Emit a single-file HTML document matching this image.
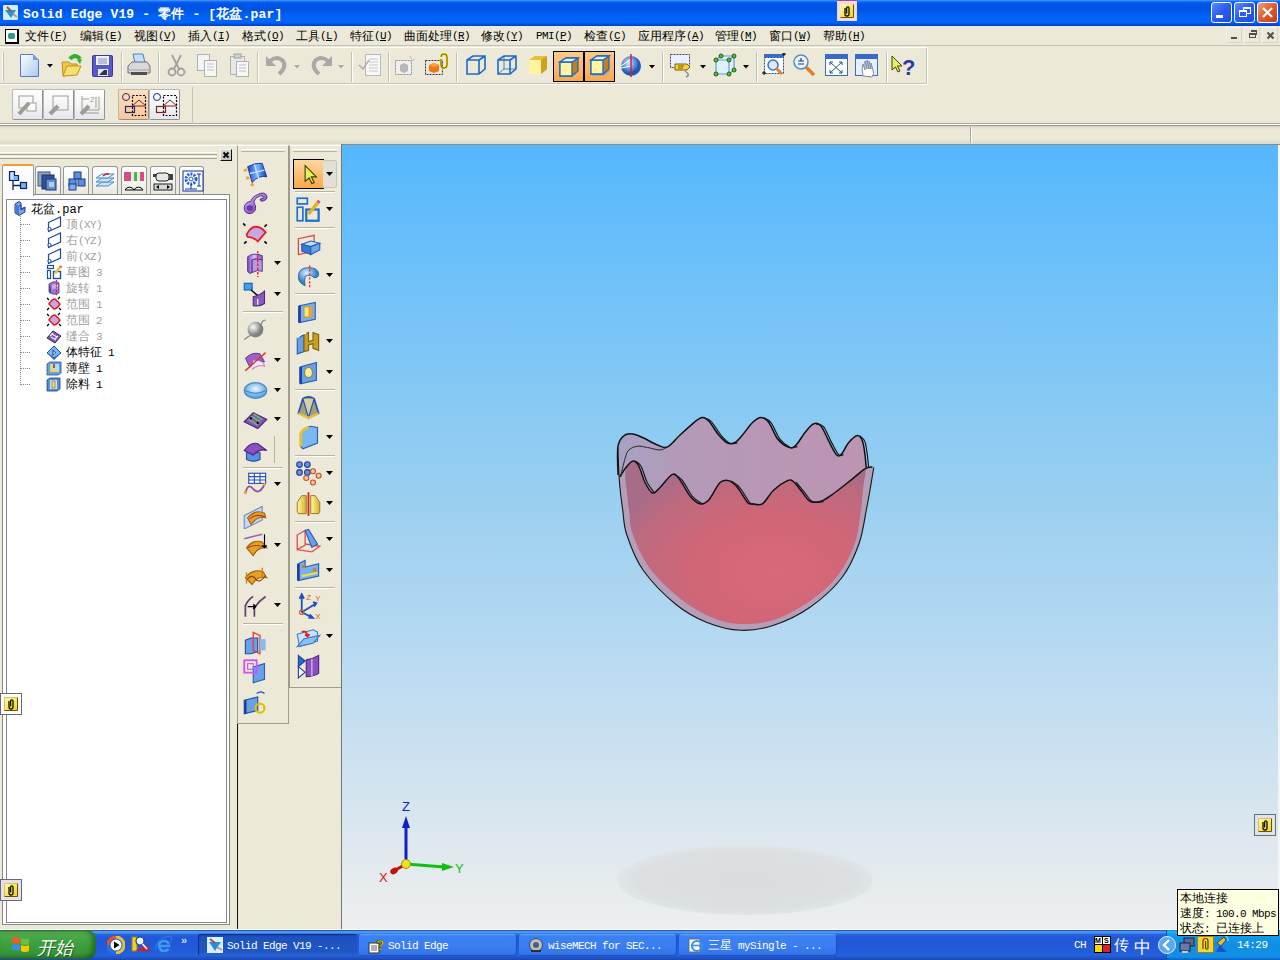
<!DOCTYPE html><html><head><meta charset="utf-8"><title>Solid Edge</title><style>
*{margin:0;padding:0;box-sizing:border-box}
html,body{width:1280px;height:960px;overflow:hidden;background:#ECE9D8;font-family:"Liberation Sans",sans-serif;font-size:12px;color:#000}
.a{position:absolute}
.t{position:absolute;white-space:nowrap;line-height:1}
</style></head><body>
<div class="a" style="left:0;top:0;width:1280px;height:26px;background:linear-gradient(#4A9AFF 0px,#2A80FF 1px,#0860F0 2px,#0055E8 4px,#0054E3 10px,#0062F6 16px,#0066FA 22px,#0052E4 24px,#003CC8 26px)"></div>
<div class="a" style="left:3px;top:5px;width:15px;height:15px;background:#CFEFFF;border-radius:1px"></div>
<svg class="a" style="left:3px;top:5px" width="15" height="15"><path d="M2 5 L8 13 L13 5 Z" fill="#2A8FD8"/><path d="M4 2 L8 6" stroke="#B05030" stroke-width="2"/><path d="M10 9 L14 12" stroke="#D09080" stroke-width="2"/></svg>
<div class="t" style="left:23px;top:5px;font:bold 13px 'Liberation Mono', monospace;color:#fff;letter-spacing:0.15px">Solid Edge V19 - 零件 - [花盆.par]</div>
<div class="a" style="left:837px;top:0px;width:20px;height:21px;background:#F6D8EE;border-top:1px solid #A05080"></div>
<svg class="a" style="left:840px;top:4px" width="14" height="14"><defs><linearGradient id="cy" x1="0" y1="0" x2="1" y2="1"><stop offset="0" stop-color="#FFFCB0"/><stop offset="1" stop-color="#F0D020"/></linearGradient></defs><rect x="0" y="0" width="14" height="14" fill="url(#cy)"/><path d="M0.5 13.5 H13.5 V0.5" stroke="#705000" fill="none"/><path d="M5 4 V10 A1.5 1.5 0 0 0 9 10 V4 A1.2 1.2 0 0 0 6.6 4 V9.5" stroke="#101000" stroke-width="1.3" fill="none"/></svg>
<div class="a" style="left:1211px;top:2px;width:21px;height:21px;border:1px solid #fff;border-radius:3px;background:linear-gradient(135deg,#5A8CFF,#2A5AF0 50%,#1F4FE0)"></div>
<div class="a" style="left:1216px;top:15px;width:7px;height:3px;background:#fff"></div>
<div class="a" style="left:1234px;top:2px;width:21px;height:21px;border:1px solid #fff;border-radius:3px;background:linear-gradient(135deg,#5A8CFF,#2A5AF0 50%,#1F4FE0)"></div>
<div class="a" style="left:1243px;top:7px;width:8px;height:7px;border:1px solid #fff;border-top-width:2px"></div>
<div class="a" style="left:1239px;top:10px;width:8px;height:7px;border:1px solid #fff;border-top-width:2px;background:#2F5FF0"></div>
<div class="a" style="left:1257px;top:2px;width:21px;height:21px;border:1px solid #fff;border-radius:3px;background:linear-gradient(135deg,#F0A080,#E05A30 50%,#C83C18)"></div>
<svg class="a" style="left:1257px;top:2px" width="21" height="21"><path d="M6 6 L15 15 M15 6 L6 15" stroke="#fff" stroke-width="2.2"/></svg>
<div class="a" style="left:0;top:26px;width:1280px;height:20px;background:#ECE9D8;border-bottom:1px solid #C5C2B2"></div>
<div class="a" style="left:5px;top:29px;width:14px;height:15px;background:#fff;border:1px solid #000;border-width:1px 2px 2px 1px"></div>
<div class="a" style="left:8px;top:33px;width:7px;height:6px;background:#2A9A8A;border-radius:2px"></div>
<div class="t" style="left:25px;top:30px;font-size:12px"><span style="font-size:12px">文件</span><span style="font:11px 'Liberation Mono', monospace;letter-spacing:-0.6px;position:relative;top:-1px">(<u>F</u>)</span></div>
<div class="t" style="left:80px;top:30px;font-size:12px"><span style="font-size:12px">编辑</span><span style="font:11px 'Liberation Mono', monospace;letter-spacing:-0.6px;position:relative;top:-1px">(<u>E</u>)</span></div>
<div class="t" style="left:134px;top:30px;font-size:12px"><span style="font-size:12px">视图</span><span style="font:11px 'Liberation Mono', monospace;letter-spacing:-0.6px;position:relative;top:-1px">(<u>V</u>)</span></div>
<div class="t" style="left:188px;top:30px;font-size:12px"><span style="font-size:12px">插入</span><span style="font:11px 'Liberation Mono', monospace;letter-spacing:-0.6px;position:relative;top:-1px">(<u>I</u>)</span></div>
<div class="t" style="left:242px;top:30px;font-size:12px"><span style="font-size:12px">格式</span><span style="font:11px 'Liberation Mono', monospace;letter-spacing:-0.6px;position:relative;top:-1px">(<u>O</u>)</span></div>
<div class="t" style="left:296px;top:30px;font-size:12px"><span style="font-size:12px">工具</span><span style="font:11px 'Liberation Mono', monospace;letter-spacing:-0.6px;position:relative;top:-1px">(<u>L</u>)</span></div>
<div class="t" style="left:350px;top:30px;font-size:12px"><span style="font-size:12px">特征</span><span style="font:11px 'Liberation Mono', monospace;letter-spacing:-0.6px;position:relative;top:-1px">(<u>U</u>)</span></div>
<div class="t" style="left:404px;top:30px;font-size:12px"><span style="font-size:12px">曲面处理</span><span style="font:11px 'Liberation Mono', monospace;letter-spacing:-0.6px;position:relative;top:-1px">(<u>R</u>)</span></div>
<div class="t" style="left:481px;top:30px;font-size:12px"><span style="font-size:12px">修改</span><span style="font:11px 'Liberation Mono', monospace;letter-spacing:-0.6px;position:relative;top:-1px">(<u>Y</u>)</span></div>
<div class="t" style="left:536px;top:30px;font-size:12px"><span style="font:11px 'Liberation Mono', monospace;letter-spacing:-0.6px;position:relative;top:-1px">PMI</span><span style="font:11px 'Liberation Mono', monospace;letter-spacing:-0.6px;position:relative;top:-1px">(<u>P</u>)</span></div>
<div class="t" style="left:584px;top:30px;font-size:12px"><span style="font-size:12px">检查</span><span style="font:11px 'Liberation Mono', monospace;letter-spacing:-0.6px;position:relative;top:-1px">(<u>C</u>)</span></div>
<div class="t" style="left:638px;top:30px;font-size:12px"><span style="font-size:12px">应用程序</span><span style="font:11px 'Liberation Mono', monospace;letter-spacing:-0.6px;position:relative;top:-1px">(<u>A</u>)</span></div>
<div class="t" style="left:715px;top:30px;font-size:12px"><span style="font-size:12px">管理</span><span style="font:11px 'Liberation Mono', monospace;letter-spacing:-0.6px;position:relative;top:-1px">(<u>M</u>)</span></div>
<div class="t" style="left:769px;top:30px;font-size:12px"><span style="font-size:12px">窗口</span><span style="font:11px 'Liberation Mono', monospace;letter-spacing:-0.6px;position:relative;top:-1px">(<u>W</u>)</span></div>
<div class="t" style="left:823px;top:30px;font-size:12px"><span style="font-size:12px">帮助</span><span style="font:11px 'Liberation Mono', monospace;letter-spacing:-0.6px;position:relative;top:-1px">(<u>H</u>)</span></div>
<div class="a" style="left:1226px;top:27px;width:16px;height:16px;border:1px solid #F4F2EA;border-right-color:#D8D5C8;border-bottom-color:#D8D5C8;background:#ECE9D8"></div>
<div class="a" style="left:1244px;top:27px;width:16px;height:16px;border:1px solid #F4F2EA;border-right-color:#D8D5C8;border-bottom-color:#D8D5C8;background:#ECE9D8"></div>
<div class="a" style="left:1262px;top:27px;width:16px;height:16px;border:1px solid #F4F2EA;border-right-color:#D8D5C8;border-bottom-color:#D8D5C8;background:#ECE9D8"></div>
<div class="a" style="left:1231px;top:37px;width:6px;height:2px;background:#505050"></div>
<div class="a" style="left:1249px;top:33px;width:7px;height:5px;border:1px solid #505050;border-top-width:2px"></div>
<div class="a" style="left:1251px;top:30px;width:6px;height:5px;border-top:2px solid #505050;border-right:1px solid #505050"></div>
<svg class="a" style="left:1266px;top:31px" width="10" height="10"><path d="M1.5 1.5 L7.5 7.5 M7.5 1.5 L1.5 7.5" stroke="#505050" stroke-width="2"/></svg>
<div class="a" style="left:0;top:47px;width:1280px;height:78px;background:#ECE9D8"></div>
<div class="a" style="left:0;top:83px;width:927px;height:1px;background:#C9C6B6"></div>
<div class="a" style="left:0;top:84px;width:928px;height:1px;background:#FFFFFF"></div>
<div class="a" style="left:0;top:47px;width:927px;height:1px;background:#FFFFFF"></div>
<div class="a" style="left:0;top:123px;width:1280px;height:1px;background:#A8A496"></div>
<div class="a" style="left:0;top:124px;width:1280px;height:1px;background:#FFFFFF"></div>
<div class="a" style="left:926px;top:48px;width:1px;height:36px;background:#C9C6B6"></div>
<div class="a" style="left:927px;top:48px;width:1px;height:37px;background:#FFFFFF"></div>
<div class="a" style="left:2px;top:52px;width:2px;height:29px;border-left:1px solid #fff;border-right:1px solid #C0BDAD"></div>
<div class="a" style="left:192px;top:87px;width:1px;height:37px;background:#C9C6B6"></div>
<svg class="a" style="left:20px;top:54px" width="20" height="23"><defs><linearGradient id="nd" x1="0" y1="0" x2="1" y2="1"><stop offset="0" stop-color="#FFFFFF"/><stop offset="1" stop-color="#A8C8F0"/></linearGradient></defs><path d="M.5 .5 H13 L18.5 6 V22.5 H.5 Z" fill="url(#nd)" stroke="#5A7AB8"/><path d="M13 .5 V6 H18.5 Z" fill="#7A9AD8"/></svg>
<svg class="a" style="left:47px;top:64px" width="6" height="4"><path d="M0 0 H6 L3 3.5 Z" fill="#000"/></svg>
<svg class="a" style="left:61px;top:54px" width="22" height="23"><path d="M1 8 L8 8 L10 10 H16 V20 L2 22 Z" fill="#F0C848" stroke="#C09020"/><path d="M2 22 L6 12 H20 L16 21 Z" fill="#F8E070" stroke="#C09020"/><path d="M9 5 Q14 -1 19 5" stroke="#30B030" stroke-width="4" fill="none"/><path d="M16 6 L21 5 L19 10 Z" fill="#30B030"/></svg>
<svg class="a" style="left:92px;top:55px" width="21" height="22"><rect x=".5" y=".5" width="20" height="21" rx="1" fill="#5A58C8" stroke="#3A38A0"/><rect x="4" y="1" width="13" height="9" fill="#F0F0F8"/><path d="M6 4 H15 M6 6 H15 M6 8 H15" stroke="#8888C0"/><rect x="6" y="14" width="10" height="7" fill="#E8E8F0"/><path d="M7 20 L12 15 H15 V20 Z" fill="#303060"/></svg>
<div class="a" style="left:121px;top:52px;width:2px;height:30px;border-left:1px solid #C5C2B2;border-right:1px solid #fff"></div>
<svg class="a" style="left:127px;top:53px" width="24" height="24"><path d="M6 1 H16 L18 10 H8 Z" fill="#BFE0FF" stroke="#5080B0"/><path d="M1 13 L5 9 H20 L23 13 V20 H1 Z" fill="#D8D8D8" stroke="#707070"/><path d="M1 17 H23" stroke="#A0A0A0"/><rect x="4" y="19" width="16" height="3" fill="#505050"/></svg>
<div class="a" style="left:158px;top:52px;width:2px;height:30px;border-left:1px solid #C5C2B2;border-right:1px solid #fff"></div>
<svg class="a" style="left:167px;top:54px" width="19" height="23"><path d="M5 1 L12 15 M14 1 L7 15" stroke="#A0A0A0" stroke-width="1.8"/><circle cx="5" cy="18" r="3.5" fill="none" stroke="#A0A0A0" stroke-width="1.8"/><circle cx="14" cy="18" r="3.5" fill="none" stroke="#A0A0A0" stroke-width="1.8"/></svg>
<svg class="a" style="left:197px;top:54px" width="21" height="23"><rect x=".5" y=".5" width="12" height="16" fill="#F4F4F4" stroke="#B0B0B0"/><rect x="7.5" y="6.5" width="12" height="16" fill="#F8F8F8" stroke="#B0B0B0"/><path d="M10 10 H17 M10 13 H17 M10 16 H17" stroke="#C0C0C0"/></svg>
<svg class="a" style="left:229px;top:53px" width="21" height="24"><rect x="1.5" y="3.5" width="14" height="18" fill="#E8E8E8" stroke="#B0B0B0"/><rect x="5" y="1" width="7" height="4" fill="#D0D0D0" stroke="#A0A0A0"/><rect x="7.5" y="8.5" width="12" height="15" fill="#F8F8F8" stroke="#B0B0B0"/><path d="M10 12 H17 M10 15 H17 M10 18 H17" stroke="#C0C0C0"/></svg>
<div class="a" style="left:257px;top:52px;width:2px;height:30px;border-left:1px solid #C5C2B2;border-right:1px solid #fff"></div>
<svg class="a" style="left:265px;top:54px" width="23" height="22"><path d="M5 7 Q12 1 18 7 Q22 13 14 20" stroke="#A8A8A8" stroke-width="4" fill="none"/><path d="M1 2 V12 H11 Z" fill="#A8A8A8"/></svg>
<svg class="a" style="left:294px;top:65px" width="6" height="4"><path d="M0 0 H6 L3 3.5 Z" fill="#A8A8A8"/></svg>
<svg class="a" style="left:310px;top:54px" width="23" height="22"><path d="M18 7 Q11 1 5 7 Q1 13 9 20" stroke="#A8A8A8" stroke-width="4" fill="none"/><path d="M22 2 V12 H12 Z" fill="#A8A8A8"/></svg>
<svg class="a" style="left:338px;top:65px" width="6" height="4"><path d="M0 0 H6 L3 3.5 Z" fill="#A8A8A8"/></svg>
<div class="a" style="left:351px;top:52px;width:2px;height:30px;border-left:1px solid #C5C2B2;border-right:1px solid #fff"></div>
<svg class="a" style="left:358px;top:54px" width="24" height="24"><rect x="7.5" y=".5" width="15" height="21" fill="#F8F8F8" stroke="#B8B8B8"/><path d="M11 5 H20 M11 8 H20 M11 11 H20 M11 14 H20 M11 17 H20" stroke="#C8C8C8"/><path d="M1 11 L5 15 L11 6" stroke="#B0B0B0" stroke-width="1.5" fill="none"/></svg>
<div class="a" style="left:388px;top:52px;width:2px;height:30px;border-left:1px solid #C5C2B2;border-right:1px solid #fff"></div>
<svg class="a" style="left:394px;top:54px" width="22" height="22"><rect x="1.5" y="6.5" width="16" height="14" fill="#F0F0F0" stroke="#909090" stroke-dasharray="2 1"/><path d="M6 11 L10 9 L14 11 V17 L10 19 L6 17 Z" fill="#B8B8B8"/><path d="M16 2 L18 7 M21 5 L16 8" stroke="#C0C0C0"/></svg>
<svg class="a" style="left:424px;top:53px" width="27" height="24"><rect x="1.5" y="7.5" width="17" height="14" fill="none" stroke="#303060" stroke-dasharray="2 1"/><path d="M5 12 L10 10 L15 12 V18 L10 20 L5 18 Z" fill="#F07818"/><path d="M5 12 L10 10 L15 12 L10 14 Z" fill="#FFA040"/><path d="M17 4 A3 3 0 0 1 23 4 V12 A3 3 0 0 1 17 12 V6" stroke="#E8C800" stroke-width="2" fill="none"/><path d="M17 4 A3 3 0 0 1 23 4 V12 A3 3 0 0 1 17 12 V6" stroke="#404000" stroke-width=".6" fill="none"/></svg>
<div class="a" style="left:456px;top:52px;width:2px;height:30px;border-left:1px solid #C5C2B2;border-right:1px solid #fff"></div>
<svg class="a" style="left:465px;top:54px" width="22" height="22"><path d="M2 6 L8 2 H20 V15 L14 20 H2 Z M2 6 H14 V20 M14 6 L20 2" fill="none" stroke="#1E6AC8" stroke-width="1.6"/></svg>
<svg class="a" style="left:496px;top:54px" width="22" height="22"><path d="M2 6 L8 2 H20 V15 L14 20 H2 Z M2 6 H14 V20 M14 6 L20 2" fill="none" stroke="#1E6AC8" stroke-width="1.6"/><path d="M2 20 L8 15 H20 M8 2 V15" stroke="#1E6AC8" stroke-width=".8" fill="none"/></svg>
<svg class="a" style="left:527px;top:54px" width="22" height="22"><path d="M2 6 L8 2 H20 V15 L14 20 H2 Z" fill="#E8C030"/><path d="M2 6 H14 V20 H2 Z" fill="#FFF4A0"/><path d="M14 6 L20 2 V15 L14 20 Z" fill="#D0A020"/></svg>
<div class="a" style="left:553px;top:51px;width:31px;height:31px;background:linear-gradient(#FFC888,#F8A850);border:1px solid #000"></div>
<div class="a" style="left:584px;top:51px;width:31px;height:31px;background:linear-gradient(#FFC888,#F8A850);border:1px solid #000"></div>
<svg class="a" style="left:558px;top:56px" width="22" height="22"><path d="M2 6 L8 2 H20 V15 L14 20 H2 Z" fill="#C08020" stroke="#1E6AC8" stroke-width="1.3"/><path d="M2 6 H14 V20 H2 Z" fill="#FFF4A0" stroke="#1E6AC8" stroke-width="1.3"/><path d="M2 6 L8 2 H20 L14 6 Z" fill="#E8F4FF" stroke="#1E6AC8" stroke-width="1.3"/></svg>
<svg class="a" style="left:589px;top:54px" width="22" height="26"><path d="M4 20 L10 16 H22 L16 22 H4 Z" fill="#A0A0A0" opacity=".7"/><path d="M2 6 L8 2 H20 V15 L14 20 H2 Z" fill="#C08020" stroke="#1E6AC8" stroke-width="1.3"/><path d="M2 6 H14 V20 H2 Z" fill="#FFF4A0" stroke="#1E6AC8" stroke-width="1.3"/><path d="M2 6 L8 2 H20 L14 6 Z" fill="#E8F4FF" stroke="#1E6AC8" stroke-width="1.3"/></svg>
<svg class="a" style="left:619px;top:54px" width="24" height="23"><defs><radialGradient id="sp" cx=".4" cy=".35"><stop offset="0" stop-color="#D8ECFF"/><stop offset="1" stop-color="#1E58B8"/></radialGradient></defs><circle cx="12" cy="12" r="10" fill="url(#sp)"/><path d="M2 12 L12 5 M2 14 L12 12" stroke="#fff"/><path d="M12 0 V23" stroke="#D02040" stroke-width="1.5"/></svg>
<svg class="a" style="left:649px;top:65px" width="6" height="4"><path d="M0 0 H6 L3 3.5 Z" fill="#000"/></svg>
<div class="a" style="left:662px;top:52px;width:2px;height:30px;border-left:1px solid #C5C2B2;border-right:1px solid #fff"></div>
<svg class="a" style="left:669px;top:53px" width="25" height="25"><rect x="1.5" y="1.5" width="19" height="13" fill="#E8F0FF" stroke="#404060" stroke-dasharray="2 1"/><path d="M6 11 H18 L21 14 L18 17 H6 Z" fill="#F8D040" stroke="#806000"/><path d="M9 13 H15 M9 15 H14" stroke="#806000"/><path d="M16 18 Q22 22 17 24" stroke="#909090" stroke-width="1.5" fill="none"/></svg>
<svg class="a" style="left:700px;top:65px" width="6" height="4"><path d="M0 0 H6 L3 3.5 Z" fill="#000"/></svg>
<svg class="a" style="left:712px;top:53px" width="26" height="25"><path d="M4 7 L9 3 H22 V17 L17 21 H4 Z M4 7 H17 V21 M17 7 L22 3" fill="#E0F0FF" stroke="#6A9AD0" stroke-width="1.2"/><g fill="#50C040" stroke="#206010"><circle cx="4" cy="7" r="2"/><circle cx="9" cy="3" r="2"/><circle cx="22" cy="3" r="2"/><circle cx="17" cy="7" r="2"/><circle cx="4" cy="21" r="2"/><circle cx="17" cy="21" r="2"/><circle cx="22" cy="17" r="2"/></g></svg>
<svg class="a" style="left:743px;top:65px" width="6" height="4"><path d="M0 0 H6 L3 3.5 Z" fill="#000"/></svg>
<div class="a" style="left:756px;top:52px;width:2px;height:30px;border-left:1px solid #C5C2B2;border-right:1px solid #fff"></div>
<svg class="a" style="left:761px;top:53px" width="26" height="25"><rect x="3" y="1" width="20" height="4" fill="#3A6AC8"/><rect x="3.5" y="4.5" width="19" height="16" fill="#fff" stroke="#1E50A0" stroke-dasharray="2 1"/><circle cx="12" cy="12" r="5" fill="#D8ECFF" stroke="#3A70C0" stroke-width="1.5"/><path d="M15 15 L21 21" stroke="#E08030" stroke-width="3"/><path d="M1 20 H5 M3 18 V22 M21 1 H25 M23 -1 V3" stroke="#000"/></svg>
<svg class="a" style="left:792px;top:53px" width="25" height="25"><circle cx="9" cy="9" r="7" fill="#E8F4FF" stroke="#5A8AC8" stroke-width="1.5"/><path d="M6 8 H12 M9 5 V8 M6 11 H12" stroke="#1E3A80" stroke-width="1.2"/><path d="M14 14 L22 22" stroke="#E08030" stroke-width="3.5"/></svg>
<svg class="a" style="left:825px;top:54px" width="24" height="23"><rect x=".5" y=".5" width="22" height="21" fill="#fff" stroke="#3A6AC8"/><rect x="1" y="1" width="21" height="4" fill="#3A6AC8"/><path d="M5 8 L17 19 M17 8 L5 19 M5 8 H8 M5 8 V11 M17 8 H14 M17 8 V11 M5 19 H8 M5 19 V16 M17 19 H14 M17 19 V16" stroke="#1E50A0"/></svg>
<svg class="a" style="left:855px;top:54px" width="25" height="24"><rect x=".5" y=".5" width="22" height="21" fill="#E8F0FF" stroke="#3A6AC8"/><rect x="1" y="1" width="21" height="4" fill="#3A6AC8"/><path d="M8 22 Q6 14 8 10 L10 16 V7 L12 15 V6 L14 15 V7 L16 15 V9 L18 16 Q20 19 17 23 Z" fill="#fff" stroke="#7A8AA8"/></svg>
<div class="a" style="left:886px;top:52px;width:2px;height:30px;border-left:1px solid #C5C2B2;border-right:1px solid #fff"></div>
<svg class="a" style="left:891px;top:54px" width="27" height="23"><path d="M1 2 L1 16 L4.5 13 L7 18 L9 17 L6.5 12 L11 12 Z" fill="#E8F060" stroke="#404000"/><text x="11" y="21" font-family="Liberation Sans" font-weight="bold" font-size="22" fill="#2A3AA8">?</text></svg>
<div class="a" style="left:12px;top:89px;width:31px;height:31px;border:1px solid #B8B8B8;border-right-color:#909090;border-bottom-color:#909090;border-radius:2px;background:linear-gradient(#FFFFFF,#F0F2F4 60%,#E4E6EA)"></div>
<div class="a" style="left:43px;top:89px;width:31px;height:31px;border:1px solid #B8B8B8;border-right-color:#909090;border-bottom-color:#909090;border-radius:2px;background:linear-gradient(#FFFFFF,#F0F2F4 60%,#E4E6EA)"></div>
<div class="a" style="left:74px;top:89px;width:31px;height:31px;border:1px solid #B8B8B8;border-right-color:#909090;border-bottom-color:#909090;border-radius:2px;background:linear-gradient(#FFFFFF,#F0F2F4 60%,#E4E6EA)"></div>
<div class="a" style="left:118px;top:89px;width:31px;height:31px;border:1px solid #B8B8B8;border-right-color:#909090;border-bottom-color:#909090;border-radius:2px;background:linear-gradient(#FCE0C0,#F8C898)"></div>
<div class="a" style="left:149px;top:89px;width:31px;height:31px;border:1px solid #B8B8B8;border-right-color:#909090;border-bottom-color:#909090;border-radius:2px;background:linear-gradient(#FFFFFF,#F0F2F4 60%,#E4E6EA)"></div>
<svg class="a" style="left:17px;top:94px" width="22" height="22"><rect x="2" y="2" width="14" height="12" fill="none" stroke="#A09C94"/><rect x="10" y="9" width="9" height="8" fill="#fff" stroke="#A09C94"/><path d="M2 20 L12 9" stroke="#A09C94" stroke-width="4"/></svg>
<svg class="a" style="left:48px;top:94px" width="22" height="22"><rect x="5" y="2" width="15" height="14" fill="none" stroke="#A09C94"/><path d="M2 20 L10 12" stroke="#A09C94" stroke-width="4"/></svg>
<svg class="a" style="left:79px;top:94px" width="22" height="22"><path d="M3 2 V16 M3 5 H10 M20 3 V16 M17 3 V14 M3 16 H20 M3 19 H20" stroke="#A09C94" fill="none"/><text x="11" y="8" font-size="8" fill="#A09C94" font-family="Liberation Sans">2</text><path d="M2 20 L10 12" stroke="#A09C94" stroke-width="4"/></svg>
<svg class="a" style="left:121px;top:92px" width="26" height="26"><circle cx="5" cy="5" r="3.5" fill="none" stroke="#1E2A80"/><rect x="11.5" y="3.5" width="13" height="20" fill="none" stroke="#000" stroke-dasharray="2 1.5" stroke-width="1.2"/><path d="M11 14 L18 8 L25 14" stroke="#802020" fill="none"/><path d="M11 14 H25" stroke="#802020"/><rect x="4.5" y="14.5" width="9" height="6" fill="none" stroke="#1E2A80" stroke-width="1.2"/></svg>
<svg class="a" style="left:152px;top:92px" width="26" height="26"><circle cx="5" cy="5" r="3.5" fill="none" stroke="#1E2A80"/><rect x="11.5" y="3.5" width="13" height="20" fill="none" stroke="#000" stroke-dasharray="2 1.5" stroke-width="1.2"/><path d="M11 14 L18 8 L25 14" stroke="#802020" fill="none"/><path d="M11 14 H25" stroke="#802020"/><rect x="4.5" y="14.5" width="9" height="6" fill="none" stroke="#802020" stroke-width="1.2"/></svg>
<div class="a" style="left:0;top:125px;width:1280px;height:19px;background:linear-gradient(#9C998A 0px,#9C998A 1px,#D4D0C4 1px,#E6E3D4 3px,#ECE9D8 5px,#ECE9D8 14px,#DCD8C8 19px)"></div>
<div class="a" style="left:970px;top:127px;width:1px;height:16px;background:#A8A498"></div>
<div class="a" style="left:971px;top:127px;width:1px;height:16px;background:#FFFFF4"></div>
<div class="a" style="left:0;top:144px;width:1280px;height:1px;background:#8A8C80"></div>
<div class="a" style="left:0;top:144px;width:342px;height:786px;background:#ECE9D8"></div>
<div class="a" style="left:0px;top:152px;width:217px;height:3px;border-top:1px solid #FFFFF8;border-bottom:1px solid #A8A494"></div>
<div class="a" style="left:0px;top:156px;width:217px;height:3px;border-top:1px solid #FFFFF8;border-bottom:1px solid #A8A494"></div>
<div class="a" style="left:220px;top:149px;width:12px;height:12px;background:linear-gradient(#D4D4D4,#C0C0C0);border:1px solid #F4F4F4;border-right-color:#101010;border-bottom-color:#101010"></div>
<svg class="a" style="left:220px;top:149px" width="12" height="12"><path d="M3.5 3.5 L8.5 8.5 M8.5 3.5 L3.5 8.5" stroke="#000" stroke-width="1.8"/></svg>
<div class="a" style="left:0;top:145px;width:236px;height:1px;background:#FFFFFF"></div>
<div class="a" style="left:2px;top:194px;width:228px;height:731px;background:#fff;border:1px solid #8C8A80"></div>
<div class="a" style="left:6px;top:199px;width:221px;height:724px;background:#fff;border:1px solid #7F8890"></div>
<div class="a" style="left:2px;top:164px;width:32px;height:32px;background:#FCFCFE;border:1px solid #919B9C;border-bottom:none;border-top:2px solid #F0A030;border-radius:2px 2px 0 0"></div>
<div class="a" style="left:35px;top:166px;width:26px;height:29px;background:linear-gradient(#FFFFFF,#F4F3EE 60%,#E8E6DC);border:1px solid #919B9C;border-bottom:none;border-radius:3px 3px 0 0"></div>
<div class="a" style="left:63px;top:166px;width:26px;height:29px;background:linear-gradient(#FFFFFF,#F4F3EE 60%,#E8E6DC);border:1px solid #919B9C;border-bottom:none;border-radius:3px 3px 0 0"></div>
<div class="a" style="left:92px;top:166px;width:26px;height:29px;background:linear-gradient(#FFFFFF,#F4F3EE 60%,#E8E6DC);border:1px solid #919B9C;border-bottom:none;border-radius:3px 3px 0 0"></div>
<div class="a" style="left:121px;top:166px;width:26px;height:29px;background:linear-gradient(#FFFFFF,#F4F3EE 60%,#E8E6DC);border:1px solid #919B9C;border-bottom:none;border-radius:3px 3px 0 0"></div>
<div class="a" style="left:150px;top:166px;width:26px;height:29px;background:linear-gradient(#FFFFFF,#F4F3EE 60%,#E8E6DC);border:1px solid #919B9C;border-bottom:none;border-radius:3px 3px 0 0"></div>
<div class="a" style="left:179px;top:166px;width:25px;height:29px;background:linear-gradient(#FFFFFF,#F4F3EE 60%,#E8E6DC);border:1px solid #919B9C;border-bottom:none;border-radius:3px 3px 0 0"></div>
<div class="a" style="left:34px;top:194px;width:195px;height:1px;background:#8C8A80"></div>
<svg class="a" style="left:8px;top:170px" width="20" height="22"><path d="M1.5 1.5 H6.5 V5.5 H10.5 V10.5 H1.5 Z" fill="#7AAEF0" stroke="#10206A" stroke-width="1.2"/><path d="M2.5 2.5 H5.5 V9.5 H2.5 Z" fill="#C8E4FF"/><path d="M5 10.5 V20 M5 15.5 H12" stroke="#10206A" stroke-width="1.3"/><rect x="12.5" y="12.5" width="6" height="6" fill="#7AAEF0" stroke="#10206A" stroke-width="1.2"/></svg>
<svg class="a" style="left:36px;top:170px" width="24" height="22"><rect x="2" y="2" width="12" height="14" fill="#90A8C0" stroke="#405870"/><rect x="6" y="5" width="12" height="14" fill="#3050A0" stroke="#203070"/><rect x="10" y="9" width="10" height="11" fill="#6090D0" stroke="#203070"/><rect x="13" y="12" width="5" height="5" fill="#B0D0F0"/></svg>
<svg class="a" style="left:66px;top:170px" width="22" height="22"><rect x="8" y="2" width="7" height="7" fill="#5A90E0" stroke="#203A80"/><rect x="3" y="9" width="7" height="7" fill="#5A90E0" stroke="#203A80"/><rect x="12" y="9" width="7" height="7" fill="#5A90E0" stroke="#203A80"/><rect x="3" y="14" width="7" height="6" fill="#7AB0F0" stroke="#203A80"/></svg>
<svg class="a" style="left:94px;top:170px" width="22" height="22"><path d="M2 16 L8 12 H20 L14 16 Z" fill="#CDE4F8" stroke="#4A8AC8"/><path d="M2 12 L8 8 H20 L14 12 Z" fill="#CDE4F8" stroke="#4A8AC8"/><path d="M2 8 L8 4 H20 L14 8 Z" fill="#E8F2FC" stroke="#4A8AC8"/><path d="M9 6 L12 4 H15" stroke="#D02020" fill="none" stroke-width="1.5"/></svg>
<svg class="a" style="left:123px;top:170px" width="22" height="22"><rect x="1" y="2" width="20" height="9" fill="#D05080"/><rect x="8" y="2" width="3" height="9" fill="#E8E8E8"/><rect x="11" y="2" width="3" height="9" fill="#40C040"/><rect x="14" y="2" width="3" height="9" fill="#E8E8E8"/><path d="M2 20 A5 5 0 0 1 11 20 Z M11 20 A5 5 0 0 1 20 20 Z" fill="#fff" stroke="#000"/></svg>
<svg class="a" style="left:152px;top:170px" width="22" height="22"><rect x="4" y="3" width="13" height="8" rx="3" fill="#E8E8E8" stroke="#202020"/><rect x="17" y="4" width="4" height="6" fill="#404040"/><rect x="1" y="4" width="3" height="3" fill="#404040"/><rect x="2" y="14" width="18" height="6" fill="#D8D8D8" stroke="#202020"/><path d="M4 17 L7 15 V19 Z M18 17 L15 15 V19 Z" fill="#000"/></svg>
<svg class="a" style="left:182px;top:170px" width="22" height="22"><rect x="1" y="1" width="20" height="20" fill="#fff" stroke="#1030A0"/><circle cx="9" cy="9" r="5" fill="none" stroke="#1E60D0" stroke-width="3" stroke-dasharray="2 1.2"/><circle cx="9" cy="9" r="2" fill="#fff" stroke="#1E60D0"/><path d="M9 14 V19 M3 19 H15 M17 4 V16 M15 4 H19 M15 16 H19" stroke="#1030A0"/></svg>
<svg class="a" style="left:12px;top:200px" width="15" height="17"><path d="M3 4 L7 1.5 L9 3 V9 L13 7 V12 L7 15.5 L3 13 Z" fill="#7AA8F0" stroke="#1E3C90" stroke-width="1"/><path d="M3 4 L7 6 V15.5 L3 13 Z" fill="#4A78D0"/><path d="M7 6 L9 5 V10 L13 8" fill="none" stroke="#1E3C90" stroke-width=".8"/></svg>
<div class="t" style="left:31px;top:203px;font-size:12px">花盆<span style="font-family:'Liberation Mono', monospace">.par</span></div>
<div class="a" style="left:20px;top:216px;width:1px;height:169px;background:repeating-linear-gradient(#888 0 1px,transparent 1px 2px)"></div>
<div class="a" style="left:21px;top:224px;width:10px;height:1px;background:repeating-linear-gradient(90deg,#888 0 1px,transparent 1px 2px)"></div>
<svg class="a" style="left:46px;top:216px" width="16" height="16"><path d="M2.5 6.5 L14.5 1 V10 L2.5 15.5 Z" fill="#fff" stroke="#1E48A8" stroke-width="1.2"/><circle cx="3.5" cy="13" r="1.6" fill="#fff" stroke="#1E48A8"/></svg>
<div class="t" style="left:66px;top:218px;font-size:12px;color:#A0A0A0"><span style="font-size:12px">顶</span><span style="font:11px 'Liberation Mono', monospace;letter-spacing:-0.60px;position:relative;top:0px">(XY)</span></div>
<div class="a" style="left:21px;top:240px;width:10px;height:1px;background:repeating-linear-gradient(90deg,#888 0 1px,transparent 1px 2px)"></div>
<svg class="a" style="left:46px;top:232px" width="16" height="16"><path d="M2.5 6.5 L14.5 1 V10 L2.5 15.5 Z" fill="#fff" stroke="#1E48A8" stroke-width="1.2"/><circle cx="3.5" cy="13" r="1.6" fill="#fff" stroke="#1E48A8"/></svg>
<div class="t" style="left:66px;top:234px;font-size:12px;color:#A0A0A0"><span style="font-size:12px">右</span><span style="font:11px 'Liberation Mono', monospace;letter-spacing:-0.60px;position:relative;top:0px">(YZ)</span></div>
<div class="a" style="left:21px;top:256px;width:10px;height:1px;background:repeating-linear-gradient(90deg,#888 0 1px,transparent 1px 2px)"></div>
<svg class="a" style="left:46px;top:248px" width="16" height="16"><path d="M2.5 6.5 L14.5 1 V10 L2.5 15.5 Z" fill="#fff" stroke="#1E48A8" stroke-width="1.2"/><circle cx="3.5" cy="13" r="1.6" fill="#fff" stroke="#1E48A8"/></svg>
<div class="t" style="left:66px;top:250px;font-size:12px;color:#A0A0A0"><span style="font-size:12px">前</span><span style="font:11px 'Liberation Mono', monospace;letter-spacing:-0.60px;position:relative;top:0px">(XZ)</span></div>
<div class="a" style="left:21px;top:272px;width:10px;height:1px;background:repeating-linear-gradient(90deg,#888 0 1px,transparent 1px 2px)"></div>
<svg class="a" style="left:46px;top:264px" width="16" height="16"><rect x="1.5" y="1.5" width="6" height="3" fill="#fff" stroke="#1E50A0" stroke-width="1.2"/><rect x="1.5" y="6.5" width="3" height="8" fill="#fff" stroke="#1E50A0" stroke-width="1.2"/><rect x="7.5" y="7.5" width="7" height="7" fill="#fff" stroke="#1E50A0" stroke-width="1.4"/><path d="M9 9.5 L14.5 2.5" stroke="#E8C040" stroke-width="2.6"/><path d="M14 2 L15.5 3.5" stroke="#E05070" stroke-width="2"/></svg>
<div class="t" style="left:66px;top:266px;font-size:12px;color:#A0A0A0"><span style="font-size:12px">草图</span><span style="font:11px 'Liberation Mono', monospace;letter-spacing:-0.60px;position:relative;top:0px">&nbsp;3</span></div>
<div class="a" style="left:21px;top:288px;width:10px;height:1px;background:repeating-linear-gradient(90deg,#888 0 1px,transparent 1px 2px)"></div>
<svg class="a" style="left:46px;top:280px" width="16" height="16"><path d="M3 4 Q8 0 13 3 V13 Q8 16 3 12 Z" fill="#9A78D0" stroke="#503088" stroke-width=".8"/><path d="M3 4 Q5 6 5 9 V14 L3 12 Z" fill="#604090"/><path d="M6 5 Q9 3.5 12 4.5 V9 Q9 8 6 9.5 Z" fill="#C8B0E8"/><path d="M10.5 0 V16" stroke="#E02828" stroke-width="1.2" stroke-dasharray="2 1.3"/></svg>
<div class="t" style="left:66px;top:282px;font-size:12px;color:#A0A0A0"><span style="font-size:12px">旋转</span><span style="font:11px 'Liberation Mono', monospace;letter-spacing:-0.60px;position:relative;top:0px">&nbsp;1</span></div>
<div class="a" style="left:21px;top:304px;width:10px;height:1px;background:repeating-linear-gradient(90deg,#888 0 1px,transparent 1px 2px)"></div>
<svg class="a" style="left:46px;top:296px" width="16" height="16"><path d="M3 8 Q6 3 9 3 L14 8 Q11 13 8 13 Z" fill="#C8A8E0" stroke="#E02030" stroke-width="1.6"/><path d="M1 2 L3 4 M14 1 L12 3 M1 14 L3 12 M15 14 L13 12" stroke="#000" stroke-width="1.3"/></svg>
<div class="t" style="left:66px;top:298px;font-size:12px;color:#A0A0A0"><span style="font-size:12px">范围</span><span style="font:11px 'Liberation Mono', monospace;letter-spacing:-0.60px;position:relative;top:0px">&nbsp;1</span></div>
<div class="a" style="left:21px;top:320px;width:10px;height:1px;background:repeating-linear-gradient(90deg,#888 0 1px,transparent 1px 2px)"></div>
<svg class="a" style="left:46px;top:312px" width="16" height="16"><path d="M3 8 Q6 3 9 3 L14 8 Q11 13 8 13 Z" fill="#C8A8E0" stroke="#E02030" stroke-width="1.6"/><path d="M1 2 L3 4 M14 1 L12 3 M1 14 L3 12 M15 14 L13 12" stroke="#000" stroke-width="1.3"/></svg>
<div class="t" style="left:66px;top:314px;font-size:12px;color:#A0A0A0"><span style="font-size:12px">范围</span><span style="font:11px 'Liberation Mono', monospace;letter-spacing:-0.60px;position:relative;top:0px">&nbsp;2</span></div>
<div class="a" style="left:21px;top:336px;width:10px;height:1px;background:repeating-linear-gradient(90deg,#888 0 1px,transparent 1px 2px)"></div>
<svg class="a" style="left:46px;top:328px" width="16" height="16"><path d="M1 10 L7 3 L15 8 L9 15 Z" fill="#7A58A8" stroke="#3A2860"/><path d="M6 6 L11 9 M5 9 L10 12 M4 8 L7 5 M9 11 L12 8" stroke="#F0F0F0" stroke-width="1.2"/></svg>
<div class="t" style="left:66px;top:330px;font-size:12px;color:#A0A0A0"><span style="font-size:12px">缝合</span><span style="font:11px 'Liberation Mono', monospace;letter-spacing:-0.60px;position:relative;top:0px">&nbsp;3</span></div>
<div class="a" style="left:21px;top:352px;width:10px;height:1px;background:repeating-linear-gradient(90deg,#888 0 1px,transparent 1px 2px)"></div>
<svg class="a" style="left:46px;top:344px" width="16" height="16"><path d="M1 9 L8 2 L15 9 L8 14 Z" fill="#7AB8F0" stroke="#1A50A8"/><path d="M1 9 L8 14 L15 9 L8 16 Z" fill="#2A60C0"/><path d="M6.5 5.5 V12 L10 8.5 Z" fill="#1030A0"/><path d="M7.5 7 V10.5 L9 8.7 Z" fill="#fff"/></svg>
<div class="t" style="left:66px;top:346px;font-size:12px;color:#000"><span style="font-size:12px">体特征</span><span style="font:11px 'Liberation Mono', monospace;letter-spacing:-0.60px;position:relative;top:0px">&nbsp;1</span></div>
<div class="a" style="left:21px;top:368px;width:10px;height:1px;background:repeating-linear-gradient(90deg,#888 0 1px,transparent 1px 2px)"></div>
<svg class="a" style="left:46px;top:360px" width="16" height="16"><path d="M1 4 L4 2 H15 V13 L12 15 H1 Z" fill="#6A9EE0" stroke="#1E50A0" stroke-width=".8"/><rect x="4" y="4" width="9" height="8" fill="#B8D8F8"/><path d="M5 5 V11 H12" stroke="#E8D850" stroke-width="2" fill="none"/><rect x="7" y="4" width="2" height="4" fill="#A06030"/></svg>
<div class="t" style="left:66px;top:362px;font-size:12px;color:#000"><span style="font-size:12px">薄壁</span><span style="font:11px 'Liberation Mono', monospace;letter-spacing:-0.60px;position:relative;top:0px">&nbsp;1</span></div>
<div class="a" style="left:21px;top:384px;width:10px;height:1px;background:repeating-linear-gradient(90deg,#888 0 1px,transparent 1px 2px)"></div>
<svg class="a" style="left:46px;top:376px" width="16" height="16"><path d="M1 4 L4 2 H14 V13 L11 15 H1 Z" fill="#5A8ED8" stroke="#1A3A80" stroke-width=".8"/><rect x="4" y="4" width="7" height="9" fill="#C8E0FA"/><rect x="6" y="5" width="3" height="7" fill="#F0E070" stroke="#906010" stroke-width=".6"/></svg>
<div class="t" style="left:66px;top:378px;font-size:12px;color:#000"><span style="font-size:12px">除料</span><span style="font:11px 'Liberation Mono', monospace;letter-spacing:-0.60px;position:relative;top:0px">&nbsp;1</span></div>
<div class="a" style="left:0;top:693px;width:22px;height:22px;background:#fff;border:1px solid #686878"></div>
<svg class="a" style="left:4px;top:697px" width="14" height="14" viewBox="0 0 14 14"><defs><linearGradient id="cg1" x1="0" y1="0" x2="1" y2="1"><stop offset="0" stop-color="#FFFCB0"/><stop offset="1" stop-color="#F0D020"/></linearGradient></defs><rect x="0" y="0" width="14" height="14" fill="url(#cg1)"/><path d="M0.5 13.5 H13.5 V0.5" stroke="#705000" fill="none"/><path d="M0.5 13.5 V0.5 H13.5" stroke="#C0A040" fill="none" stroke-width=".6"/><path d="M5 4 V10 A1.5 1.5 0 0 0 9 10 V4 A1.2 1.2 0 0 0 6.6 4 V9.5" stroke="#101000" stroke-width="1.3" fill="none"/></svg>
<div class="a" style="left:0;top:879px;width:22px;height:22px;background:#E6E2EC;border:1px solid #686878"></div>
<svg class="a" style="left:4px;top:883px" width="14" height="14" viewBox="0 0 14 14"><defs><linearGradient id="cg2" x1="0" y1="0" x2="1" y2="1"><stop offset="0" stop-color="#FFFCB0"/><stop offset="1" stop-color="#F0D020"/></linearGradient></defs><rect x="0" y="0" width="14" height="14" fill="url(#cg2)"/><path d="M0.5 13.5 H13.5 V0.5" stroke="#705000" fill="none"/><path d="M0.5 13.5 V0.5 H13.5" stroke="#C0A040" fill="none" stroke-width=".6"/><path d="M5 4 V10 A1.5 1.5 0 0 0 9 10 V4 A1.2 1.2 0 0 0 6.6 4 V9.5" stroke="#101000" stroke-width="1.3" fill="none"/></svg>
<div class="a" style="left:237px;top:145px;width:52px;height:579px;border:1px solid #fff;border-right-color:#A09C8C;border-bottom-color:#A09C8C;border-left-color:#A09C8C"></div>
<div class="a" style="left:289px;top:145px;width:53px;height:543px;border:1px solid #fff;border-right:none;border-bottom-color:#A09C8C;border-left-color:#A09C8C"></div>
<div class="a" style="left:237px;top:724px;width:1px;height:206px;background:#101010"></div>
<div class="a" style="left:241px;top:149px;width:44px;height:3px;border-top:1px solid #fff;border-bottom:1px solid #B8B4A4;border-radius:1px"></div>
<div class="a" style="left:293px;top:149px;width:44px;height:3px;border-top:1px solid #fff;border-bottom:1px solid #B8B4A4;border-radius:1px"></div>
<div class="a" style="left:243px;top:311px;width:40px;height:2px;border-top:1px solid #B8B4A4;border-bottom:1px solid #fff"></div>
<div class="a" style="left:243px;top:467px;width:40px;height:2px;border-top:1px solid #B8B4A4;border-bottom:1px solid #fff"></div>
<div class="a" style="left:243px;top:623px;width:40px;height:2px;border-top:1px solid #B8B4A4;border-bottom:1px solid #fff"></div>
<div class="a" style="left:295px;top:191px;width:40px;height:2px;border-top:1px solid #B8B4A4;border-bottom:1px solid #fff"></div>
<div class="a" style="left:295px;top:227px;width:40px;height:2px;border-top:1px solid #B8B4A4;border-bottom:1px solid #fff"></div>
<div class="a" style="left:295px;top:293px;width:40px;height:2px;border-top:1px solid #B8B4A4;border-bottom:1px solid #fff"></div>
<div class="a" style="left:295px;top:389px;width:40px;height:2px;border-top:1px solid #B8B4A4;border-bottom:1px solid #fff"></div>
<div class="a" style="left:295px;top:455px;width:40px;height:2px;border-top:1px solid #B8B4A4;border-bottom:1px solid #fff"></div>
<div class="a" style="left:295px;top:521px;width:40px;height:2px;border-top:1px solid #B8B4A4;border-bottom:1px solid #fff"></div>
<div class="a" style="left:295px;top:587px;width:40px;height:2px;border-top:1px solid #B8B4A4;border-bottom:1px solid #fff"></div>
<div class="a" style="left:274px;top:436px;width:1px;height:27px;background:#B8B4A4"></div>
<svg class="a" style="left:242px;top:160px" width="27" height="27" viewBox="0 0 24 24"><defs><linearGradient id="bs" x1="0" x2="1"><stop offset="0" stop-color="#1848C8"/><stop offset=".5" stop-color="#7AB8FF"/><stop offset="1" stop-color="#1040B0"/></linearGradient></defs><path d="M5 6 Q12 2 18 3 L22 15 Q15 13 9 20 Z" fill="url(#bs)" stroke="#1030A0" stroke-width=".8"/><path d="M11 4 L15 17 M7 12 L20 9" stroke="#C8E0FF" stroke-width="1.2"/><circle cx="3" cy="9" r="1.5" fill="#F0A030"/><circle cx="5" cy="16" r="1.5" fill="#F0A030"/><circle cx="9" cy="22" r="1.5" fill="#F0A030"/></svg>
<svg class="a" style="left:242px;top:190px" width="27" height="27" viewBox="0 0 24 24"><defs><linearGradient id="ps" x1="0" y1="0" x2="1" y2="1"><stop offset="0" stop-color="#E8D0FF"/><stop offset=".5" stop-color="#A070D8"/><stop offset="1" stop-color="#5A2A98"/></linearGradient></defs><path d="M14 4 Q20 1 22 5 Q23 9 18 10 Q16 10 16 8 Q19 8 19 6 Q17 4 13 7 Q9 10 12 14 Q13 20 7 21 Q2 21 2 16 Q2 11 8 10 Q9 6 14 4 Z" fill="url(#ps)" stroke="#4A2080" stroke-width=".8"/><ellipse cx="7" cy="16" rx="3" ry="2.5" fill="#6A3AA8"/></svg>
<svg class="a" style="left:242px;top:220px" width="27" height="27" viewBox="0 0 24 24"><path d="M4 13 Q8 6 12 6 Q17 6 21 11 L14 19 Q10 15 5 15 Z" fill="#C8A8E0" stroke="#E02030" stroke-width="1.6"/><path d="M1 3 L3 5 M22 4 L20 6 M2 21 L4 19 M22 21 L20 19" stroke="#000" stroke-width="1.5"/></svg>
<svg class="a" style="left:242px;top:250px" width="27" height="27" viewBox="0 0 24 24"><defs><linearGradient id="pr" x1="0" x2="1"><stop offset="0" stop-color="#7A4AB8"/><stop offset=".45" stop-color="#D8C0F8"/><stop offset="1" stop-color="#8A5AC8"/></linearGradient></defs><path d="M5 6 Q10 2 18 5 V9 Q12 7 9 9 V20 Q7 22 5 19 Z" fill="url(#pr)" stroke="#502888" stroke-width=".8"/><path d="M9 9 Q12 7 18 9 V19 Q14 17 9 20 Z" fill="#B898E0" stroke="#502888" stroke-width=".8"/><path d="M14 1 V24" stroke="#E02828" stroke-width="1.3" stroke-dasharray="2.2 1.5"/></svg>
<svg class="a" style="left:274px;top:261px" width="7" height="4"><path d="M0 0 H7 L3.5 4 Z" fill="#000"/></svg>
<svg class="a" style="left:242px;top:281px" width="27" height="27" viewBox="0 0 24 24"><rect x="2" y="2" width="7" height="6" fill="#40A0E8" stroke="#1060B0"/><path d="M8 8 L14 13" stroke="#000" stroke-width="1.2"/><path d="M10 14 Q16 13 20 9 V20 Q16 23 10 22 Z" fill="#8A5AC0" stroke="#502A80"/><path d="M14 16 V21" stroke="#fff"/></svg>
<svg class="a" style="left:274px;top:292px" width="7" height="4"><path d="M0 0 H7 L3.5 4 Z" fill="#000"/></svg>
<svg class="a" style="left:242px;top:316px" width="27" height="27" viewBox="0 0 24 24"><defs><radialGradient id="gs" cx=".35" cy=".35"><stop offset="0" stop-color="#fff"/><stop offset="1" stop-color="#808080"/></radialGradient></defs><circle cx="12" cy="12" r="7" fill="url(#gs)"/><path d="M2 21 Q8 16 12 16 M17 8 Q18 3 21 4" stroke="#909090" fill="none" stroke-width="1.2"/></svg>
<svg class="a" style="left:242px;top:347px" width="27" height="27" viewBox="0 0 24 24"><path d="M3 10 Q9 4 16 6 L20 13 Q12 11 7 18 Z" fill="#9A60C8" stroke="#603090" stroke-width=".8"/><path d="M10 12 Q14 11 19 14 L20 17 Q14 15 9 20" fill="#F0E8F8" stroke="#C090C0"/><path d="M3 21 L21 5" stroke="#E03030" stroke-width="1.2"/></svg>
<svg class="a" style="left:274px;top:358px" width="7" height="4"><path d="M0 0 H7 L3.5 4 Z" fill="#000"/></svg>
<svg class="a" style="left:242px;top:377px" width="27" height="27" viewBox="0 0 24 24"><defs><radialGradient id="dk" cx=".5" cy=".4"><stop offset="0" stop-color="#F0F8FF"/><stop offset="1" stop-color="#60A8E0"/></radialGradient></defs><ellipse cx="12" cy="12" rx="10" ry="7" fill="url(#dk)" stroke="#4088C8"/><path d="M3 12 Q12 17 21 12" stroke="#4088C8" fill="none"/></svg>
<svg class="a" style="left:274px;top:388px" width="7" height="4"><path d="M0 0 H7 L3.5 4 Z" fill="#000"/></svg>
<svg class="a" style="left:242px;top:406px" width="27" height="27" viewBox="0 0 24 24"><path d="M2 14 L10 6 L22 12 L14 20 Z" fill="#8A50C0" stroke="#502080"/><path d="M8 9 L16 14 M6 12 L14 17 M10 7 L18 12" stroke="#60C060" stroke-width="1.5"/><circle cx="8" cy="11" r="1" fill="#000"/><circle cx="14" cy="15" r="1" fill="#000"/></svg>
<svg class="a" style="left:274px;top:417px" width="7" height="4"><path d="M0 0 H7 L3.5 4 Z" fill="#000"/></svg>
<svg class="a" style="left:242px;top:437px" width="27" height="27" viewBox="0 0 24 24"><path d="M4 14 V20 Q10 23 16 20 V14 Z" fill="#5A90E0" stroke="#2050A0"/><path d="M2 12 Q8 4 14 6 L22 12 Q16 10 10 16 Z" fill="#8A50C0" stroke="#502080"/></svg>
<svg class="a" style="left:242px;top:471px" width="27" height="27" viewBox="0 0 24 24"><rect x="6" y="2" width="15" height="9" fill="#fff" stroke="#2050C0"/><path d="M6 5 H21 M6 8 H21 M11 2 V11 M16 2 V11" stroke="#2050C0"/><path d="M3 20 Q5 10 10 16 T20 12" stroke="#9050A0" fill="none" stroke-width="1.6"/><circle cx="3" cy="19" r="1.3" fill="#F0A020"/><circle cx="20" cy="12" r="1.3" fill="#F0A020"/></svg>
<svg class="a" style="left:274px;top:482px" width="7" height="4"><path d="M0 0 H7 L3.5 4 Z" fill="#000"/></svg>
<svg class="a" style="left:242px;top:502px" width="27" height="27" viewBox="0 0 24 24"><path d="M2 12 L18 4 V16 L2 24 Z" fill="#C8D8F0" stroke="#6A90C8"/><path d="M5 14 Q12 6 20 10 L21 14 Q14 12 8 20 Z" fill="#E8A020" stroke="#A06010"/><path d="M7 15 Q12 10 20 13" stroke="#A04040" fill="none"/></svg>
<svg class="a" style="left:242px;top:532px" width="27" height="27" viewBox="0 0 24 24"><path d="M2 6 L18 2" stroke="#9060B0" stroke-width="1.4"/><path d="M4 14 Q10 6 18 9 L22 14 Q14 13 10 21 Z" fill="#E8A020" stroke="#A06010"/><path d="M5 14 Q12 10 21 14" stroke="#A04040" fill="none"/><path d="M20 2 V14 M18 12 L20 14 L22 12" stroke="#000"/></svg>
<svg class="a" style="left:274px;top:543px" width="7" height="4"><path d="M0 0 H7 L3.5 4 Z" fill="#000"/></svg>
<svg class="a" style="left:242px;top:562px" width="27" height="27" viewBox="0 0 24 24"><path d="M3 14 Q10 5 19 9 L22 14 Q14 12 9 20 Z" fill="#E8A020" stroke="#A06010"/><path d="M4 16 Q9 10 12 15 T21 12" stroke="#804020" fill="none"/><path d="M4 9 L4 19 M18 5 L18 15" stroke="#D08010" stroke-width="1.2"/></svg>
<svg class="a" style="left:242px;top:592px" width="27" height="27" viewBox="0 0 24 24"><path d="M3 22 V12 Q6 6 10 4" stroke="#604070" fill="none" stroke-width="1.5"/><path d="M11 22 V14 Q15 8 21 4" stroke="#604070" fill="none" stroke-width="1.5"/><path d="M5 13 H12 M10 11 L12 13 L10 15" stroke="#000" stroke-width="1.3" fill="none"/></svg>
<svg class="a" style="left:274px;top:603px" width="7" height="4"><path d="M0 0 H7 L3.5 4 Z" fill="#000"/></svg>
<svg class="a" style="left:242px;top:629px" width="27" height="27" viewBox="0 0 24 24"><path d="M3 10 L8 8 H14 V20 L8 22 H3 Z" fill="#6AA0E8" stroke="#2050A0"/><path d="M10 3 L16 6 V22 L10 19 Z" fill="none" stroke="#E04040" stroke-width="1.2"/><rect x="16" y="9" width="5" height="10" fill="#8AB8F0"/></svg>
<svg class="a" style="left:242px;top:658px" width="27" height="27" viewBox="0 0 24 24"><path d="M10 8 L20 5 V19 L10 22 Z" fill="#6AA0E8" stroke="#2A60B0"/><rect x="2" y="2" width="11" height="11" fill="none" stroke="#D050F0" stroke-width="1.6"/><rect x="5" y="5" width="5" height="5" fill="none" stroke="#D050F0"/></svg>
<svg class="a" style="left:242px;top:689px" width="27" height="27" viewBox="0 0 24 24"><path d="M2 10 L14 7 V19 L2 22 Z" fill="#6AA0E8" stroke="#2050A0"/><path d="M3 10 V22" stroke="#1E3A90" stroke-width="2"/><circle cx="16" cy="17" r="4" fill="none" stroke="#E0C000" stroke-width="2"/><path d="M13 4 Q17 1 20 4" stroke="#2050A0" fill="none"/></svg>
<div class="a" style="left:293px;top:159px;width:31px;height:30px;background:linear-gradient(#FFD8A0,#F8A848);border:1px solid #000"></div>
<div class="a" style="left:323px;top:160px;width:14px;height:28px;background:#E2DFD6;border:1px solid #C8C4B8;border-left:none;border-radius:0 3px 3px 0"></div>
<svg class="a" style="left:295px;top:160px" width="27" height="27" viewBox="0 0 24 24"><path d="M9 5 L9 19 L12.5 16 L15 21 L17 20 L14.5 15 L19 15 Z" fill="#E8F060" stroke="#404000"/></svg>
<svg class="a" style="left:326px;top:172px" width="7" height="4"><path d="M0 0 H7 L3.5 4 Z" fill="#000"/></svg>
<svg class="a" style="left:295px;top:196px" width="27" height="27" viewBox="0 0 24 24"><rect x="2" y="2" width="9" height="5" fill="none" stroke="#1E70D0" stroke-width="1.5"/><rect x="2" y="10" width="5" height="12" fill="none" stroke="#1E70D0" stroke-width="1.5"/><rect x="10" y="12" width="11" height="10" fill="none" stroke="#1E70D0" stroke-width="2"/><path d="M12 16 L21 5" stroke="#E8B020" stroke-width="3"/><path d="M20 4 L22 6" stroke="#E04090" stroke-width="2"/></svg>
<svg class="a" style="left:326px;top:207px" width="7" height="4"><path d="M0 0 H7 L3.5 4 Z" fill="#000"/></svg>
<svg class="a" style="left:295px;top:232px" width="27" height="27" viewBox="0 0 24 24"><path d="M3 6 L17 3 V17 L3 20 Z" fill="none" stroke="#E04040" stroke-width="1.1"/><path d="M6 11 L14 8 L22 10 L14 13 Z" fill="#BFE0FF" stroke="#2A60B0"/><path d="M6 11 V17 L14 20 V13 Z" fill="#3A78D0" stroke="#2A60B0"/><path d="M14 13 L22 10 V16 L14 20 Z" fill="#6AA8EE" stroke="#2A60B0"/></svg>
<svg class="a" style="left:295px;top:262px" width="27" height="27" viewBox="0 0 24 24"><defs><radialGradient id="tr" cx=".4" cy=".3"><stop offset="0" stop-color="#D8F0FF"/><stop offset="1" stop-color="#3A80C8"/></radialGradient></defs><path d="M3 13 Q3 5 12 5 Q21 5 21 11 Q21 14 17 14 Q13 10 9 13 Q8 17 9 21 Q3 19 3 13 Z" fill="url(#tr)" stroke="#2A60A0" stroke-width=".8"/><path d="M13 3 V23" stroke="#E03030" stroke-dasharray="2 1.5" stroke-width="1.2"/></svg>
<svg class="a" style="left:326px;top:273px" width="7" height="4"><path d="M0 0 H7 L3.5 4 Z" fill="#000"/></svg>
<svg class="a" style="left:295px;top:299px" width="27" height="27" viewBox="0 0 24 24"><path d="M4 6 L18 3 V18 L4 21 Z" fill="#7AB0F0" stroke="#2A60B0"/><path d="M4 6 V21" stroke="#1E40A0" stroke-width="2.5"/><rect x="8" y="7" width="7" height="9" fill="#F0E890" stroke="#C0A020"/><rect x="12" y="7" width="3" height="9" fill="#F0A030"/></svg>
<svg class="a" style="left:295px;top:328px" width="27" height="27" viewBox="0 0 24 24"><path d="M2 9 L8 6 V21 L2 23 Z" fill="#6AA0E8" stroke="#2A60B0"/><path d="M8 6 L12 4 V12 L16 11 V4 L21 6 V20 L16 18 V14 L12 15 V20 L8 21 Z" fill="#C8A020" stroke="#806010"/><path d="M2 9 L6 5 H10" fill="none" stroke="#fff"/></svg>
<svg class="a" style="left:326px;top:339px" width="7" height="4"><path d="M0 0 H7 L3.5 4 Z" fill="#000"/></svg>
<svg class="a" style="left:295px;top:359px" width="27" height="27" viewBox="0 0 24 24"><path d="M5 7 L19 3 V19 L5 22 Z" fill="#6AA0E8" stroke="#2A60B0"/><path d="M5 7 V22" stroke="#1E40A0" stroke-width="2.5"/><ellipse cx="12" cy="12" rx="3.5" ry="4.5" fill="#F8F0A0" stroke="#A08020"/></svg>
<svg class="a" style="left:326px;top:370px" width="7" height="4"><path d="M0 0 H7 L3.5 4 Z" fill="#000"/></svg>
<svg class="a" style="left:295px;top:393px" width="27" height="27" viewBox="0 0 24 24"><path d="M3 18 L7 5 Q12 2 17 5 L21 18 L12 22 Z" fill="#A0A080" stroke="#1E50B0" stroke-width="1.5"/><path d="M7 5 L12 22 L17 5" fill="#D8D0A0" stroke="#1E50B0"/><path d="M3 18 L12 22 L21 18" stroke="#E8C040" stroke-width="2" fill="none"/></svg>
<svg class="a" style="left:295px;top:424px" width="27" height="27" viewBox="0 0 24 24"><path d="M5 20 V8 Q8 3 14 2 L20 3 V17 L7 22 Z" fill="#7AB8F0" stroke="#2A60B0"/><path d="M5 20 V9 Q7 4 12 3" stroke="#E8C030" stroke-width="2.5" fill="none"/></svg>
<svg class="a" style="left:326px;top:435px" width="7" height="4"><path d="M0 0 H7 L3.5 4 Z" fill="#000"/></svg>
<svg class="a" style="left:295px;top:460px" width="27" height="27" viewBox="0 0 24 24"><g fill="#6A90E0" stroke="#1E40A0"><circle cx="4" cy="4" r="2.5"/><circle cx="11" cy="4" r="2.5"/><circle cx="4" cy="11" r="2.5"/><circle cx="11" cy="11" r="2.5"/></g><g fill="#F8C8A0" stroke="#C05020"><circle cx="16" cy="10" r="2.2"/><circle cx="21" cy="14" r="2.2"/><circle cx="16" cy="20" r="2.2"/><circle cx="10" cy="16" r="2.2"/></g></svg>
<svg class="a" style="left:326px;top:471px" width="7" height="4"><path d="M0 0 H7 L3.5 4 Z" fill="#000"/></svg>
<svg class="a" style="left:295px;top:490px" width="27" height="27" viewBox="0 0 24 24"><defs><linearGradient id="mr" x1="0" x2="1"><stop offset="0" stop-color="#FFF8A0"/><stop offset="1" stop-color="#D8B030"/></linearGradient></defs><path d="M2 11 L6 5 H10 V21 H3 L2 19 Z" fill="url(#mr)" stroke="#907010" stroke-width=".8"/><path d="M14 5 H18 L22 11 V19 L21 21 H14 Z" fill="url(#mr)" stroke="#907010" stroke-width=".8"/><path d="M12 2 V23" stroke="#D02020" stroke-width="1.6"/></svg>
<svg class="a" style="left:326px;top:501px" width="7" height="4"><path d="M0 0 H7 L3.5 4 Z" fill="#000"/></svg>
<svg class="a" style="left:295px;top:526px" width="27" height="27" viewBox="0 0 24 24"><path d="M2 8 L9 4 V17 L2 21 Z" fill="none" stroke="#E05050" stroke-width="1.2"/><path d="M2 21 L15 23 L22 18 L9 16" fill="none" stroke="#E05050" stroke-width="1.2"/><path d="M9 4 L12 3 L20 16 L15 19 Z" fill="#6AA0E8" stroke="#2A60B0"/></svg>
<svg class="a" style="left:326px;top:537px" width="7" height="4"><path d="M0 0 H7 L3.5 4 Z" fill="#000"/></svg>
<svg class="a" style="left:295px;top:557px" width="27" height="27" viewBox="0 0 24 24"><path d="M3 6 L9 3 V9 L21 6 V17 L3 21 Z" fill="#7AB0F0" stroke="#2A60B0"/><path d="M3 6 V21" stroke="#1E40A0" stroke-width="2.5"/><path d="M6 17 L20 14" stroke="#F0E040" stroke-width="2"/><rect x="6" y="7" width="3" height="3" fill="#C08040"/><rect x="16" y="10" width="3" height="3" fill="#C08040"/></svg>
<svg class="a" style="left:326px;top:568px" width="7" height="4"><path d="M0 0 H7 L3.5 4 Z" fill="#000"/></svg>
<svg class="a" style="left:295px;top:592px" width="27" height="27" viewBox="0 0 24 24"><path d="M6 18 V3 M4 6 L6 2 L8 6" stroke="#1E50C0" stroke-width="1.6" fill="none"/><path d="M6 18 L19 10 M16 9 L19 10 L17 13" stroke="#1E50C0" stroke-width="1.6" fill="none"/><path d="M6 18 L16 23 M13 20 L16 23 L12 23" stroke="#1E50C0" stroke-width="1.6" fill="none"/><circle cx="6" cy="18" r="2" fill="none" stroke="#D06020"/><text x="10" y="7" font-size="7" fill="#D06020" font-family="Liberation Sans">Z</text><text x="18" y="8" font-size="7" fill="#D06020" font-family="Liberation Sans">Y</text><text x="18" y="24" font-size="7" fill="#D06020" font-family="Liberation Sans">X</text></svg>
<svg class="a" style="left:295px;top:623px" width="27" height="27" viewBox="0 0 24 24"><path d="M2 10 L16 6 L20 8 V16 L4 21 Z" fill="#C8E4FF" stroke="#3A78C8"/><path d="M2 21 L8 14 L22 11 L16 18 Z" fill="#8CC0F0" stroke="#3A78C8"/><path d="M6 8 Q10 6 11 11 M9 10 L11 12 L13 10" stroke="#E02020" stroke-width="1.6" fill="none"/></svg>
<svg class="a" style="left:326px;top:634px" width="7" height="4"><path d="M0 0 H7 L3.5 4 Z" fill="#000"/></svg>
<svg class="a" style="left:295px;top:652px" width="27" height="27" viewBox="0 0 24 24"><path d="M3 3 L9 8 L3 13 Z" fill="#1E70C0" stroke="#1E40A0"/><path d="M3 13 L9 18 L3 23 Z" fill="#fff" stroke="#1E40A0"/><path d="M10 7 Q16 6 21 3 V19 Q16 22 10 22 Z" fill="#8A50C0" stroke="#502080"/><path d="M15 6 V22" stroke="#D8C8F0"/></svg>
<div class="a" style="left:342px;top:145px;width:936px;height:785px;background:linear-gradient(#55B7FD 0%,#74C3F8 20%,#9ACFF0 45%,#BDDCF2 68%,#D6E5EF 84%,#E6EBEE 94%,#EDEFF0 100%)"></div>
<div class="a" style="left:1278px;top:145px;width:2px;height:785px;background:#F4F4F4"></div>
<div class="a" style="left:341px;top:144px;width:1px;height:786px;background:#6A7880"></div>
<svg class="a" style="left:342px;top:145px" width="936" height="784"><defs>
<linearGradient id="wall" x1="0" x2="1"><stop offset="0" stop-color="#A6A2C4"/><stop offset=".25" stop-color="#B49AB8"/><stop offset="1" stop-color="#BC94B2"/></linearGradient>
<radialGradient id="red" cx=".62" cy=".68" r=".72" fx=".62" fy=".68"><stop offset="0" stop-color="#D8697A"/><stop offset=".45" stop-color="#D16677"/><stop offset=".8" stop-color="#BE6A7E"/><stop offset="1" stop-color="#A86C88"/></radialGradient>
<radialGradient id="shadow" cx=".5" cy=".5" r=".5"><stop offset="0" stop-color="#D9DDE0"/><stop offset=".85" stop-color="#DCE0E3"/><stop offset="1" stop-color="#E0E5E8"/></radialGradient>
</defs><ellipse cx="403.0" cy="735.0" rx="128" ry="35" fill="url(#shadow)"/><path d="M276.1 330.0 C276.0 325.4 275.0 308.8 275.8 302.5 C276.5 296.2 278.3 294.3 280.5 292.0 C282.7 289.7 285.7 288.7 289.0 288.8 C292.3 288.8 296.1 290.6 300.5 292.5 C304.9 294.4 311.3 298.4 315.5 300.0 C319.7 301.6 321.8 303.6 325.5 301.9 C329.2 300.2 333.8 293.9 338.0 290.0 C342.2 286.1 346.9 281.7 350.5 278.8 C354.1 275.8 357.2 273.0 359.9 272.5 C362.6 272.0 363.9 273.1 366.8 276.0 C369.6 278.9 373.6 286.3 376.8 290.0 C379.9 293.7 382.8 296.8 385.5 298.0 C388.2 299.2 390.5 298.8 393.0 297.5 C395.5 296.2 397.6 293.3 400.5 290.0 C403.4 286.7 407.4 280.4 410.5 277.5 C413.6 274.6 416.5 272.5 419.2 272.5 C422.0 272.5 424.0 274.0 426.8 277.5 C429.5 281.0 432.4 289.7 435.5 293.8 C438.6 297.8 442.6 300.6 445.5 301.9 C448.4 303.1 450.1 303.6 453.0 301.2 C455.9 298.9 459.9 291.2 463.0 287.5 C466.1 283.8 469.0 279.8 471.8 278.8 C474.5 277.7 476.8 278.3 479.2 281.2 C481.8 284.2 484.2 291.6 486.8 296.2 C489.2 300.9 492.2 307.2 494.2 309.4 C496.3 311.6 497.2 311.4 499.2 309.4 C501.3 307.4 504.0 300.6 506.8 297.5 C509.5 294.4 513.2 290.8 515.5 290.6 C517.8 290.4 519.2 293.0 520.5 296.2 C521.8 299.5 522.4 305.6 523.0 310.0 C523.6 314.4 524.0 320.4 524.2 322.5 L530.5 321.9 C529.2 322.2 526.3 321.8 523.0 323.8 C519.7 325.7 515.5 329.8 510.5 333.8 C505.5 337.7 498.2 343.8 493.0 347.5 C487.8 351.2 483.4 354.8 479.2 356.2 C475.1 357.7 471.1 357.7 468.0 356.2 C464.9 354.8 463.2 350.7 460.5 347.5 C457.8 344.3 454.2 338.9 451.8 336.9 C449.2 334.9 448.8 334.2 445.5 335.6 C442.2 337.0 435.9 341.1 431.8 345.0 C427.6 348.9 424.0 356.5 420.5 358.8 C417.0 361.0 413.0 359.0 410.5 358.8 C408.0 358.5 408.0 360.2 405.5 357.5 C403.0 354.8 398.6 346.1 395.5 342.5 C392.4 338.9 389.7 336.4 386.8 335.6 C383.8 334.8 381.3 334.3 378.0 337.5 C374.7 340.7 370.1 351.5 366.8 355.0 C363.4 358.5 361.1 359.4 358.0 358.8 C354.9 358.1 351.3 355.0 348.0 351.0 C344.7 347.0 340.9 338.6 338.0 335.0 C335.1 331.4 333.8 328.1 330.5 329.4 C327.2 330.6 321.3 339.4 318.0 342.5 C314.7 345.6 313.0 348.8 310.5 348.0 C308.0 347.2 305.3 342.0 303.0 337.5 C300.7 333.0 298.8 324.6 296.8 321.0 C294.8 317.4 293.1 315.8 291.0 316.0 C288.9 316.2 286.2 319.9 284.0 322.5 C281.8 325.1 279.0 330.3 278.0 331.9 Z" fill="url(#wall)"/><path d="M278.0 331.9 C279.0 330.3 281.8 325.1 284.0 322.5 C286.2 319.9 288.9 316.2 291.0 316.0 C293.1 315.8 294.8 317.4 296.8 321.0 C298.8 324.6 300.7 333.0 303.0 337.5 C305.3 342.0 308.0 347.2 310.5 348.0 C313.0 348.8 314.7 345.6 318.0 342.5 C321.3 339.4 327.2 330.6 330.5 329.4 C333.8 328.1 335.1 331.4 338.0 335.0 C340.9 338.6 344.7 347.0 348.0 351.0 C351.3 355.0 354.9 358.1 358.0 358.8 C361.1 359.4 363.4 358.5 366.8 355.0 C370.1 351.5 374.7 340.7 378.0 337.5 C381.3 334.3 383.8 334.8 386.8 335.6 C389.7 336.4 392.4 338.9 395.5 342.5 C398.6 346.1 403.0 354.8 405.5 357.5 C408.0 360.2 408.0 358.5 410.5 358.8 C413.0 359.0 417.0 361.0 420.5 358.8 C424.0 356.5 427.6 348.9 431.8 345.0 C435.9 341.1 442.2 337.0 445.5 335.6 C448.8 334.2 449.2 334.9 451.8 336.9 C454.2 338.9 457.8 344.3 460.5 347.5 C463.2 350.7 464.9 354.8 468.0 356.2 C471.1 357.7 475.1 357.7 479.2 356.2 C483.4 354.8 487.8 351.2 493.0 347.5 C498.2 343.8 505.5 337.7 510.5 333.8 C515.5 329.8 519.7 325.7 523.0 323.8 C526.3 321.8 529.2 322.2 530.5 321.9 L531.8 322.5 C531.1 326.2 529.2 337.9 528.0 345.0 C526.8 352.1 526.1 356.0 524.3 365.0 C522.5 374.0 521.0 387.5 517.0 398.8 C513.0 410.0 508.1 422.0 500.0 432.5 C491.9 443.0 479.6 454.1 468.4 462.0 C457.1 469.9 444.1 476.1 432.5 480.0 C420.9 483.9 410.0 485.7 398.8 485.3 C387.5 484.9 375.8 481.8 365.0 477.5 C354.2 473.2 344.7 468.2 334.0 459.5 C323.3 450.8 309.2 436.5 301.0 425.0 C292.8 413.5 288.3 400.3 284.9 390.3 C281.5 380.3 281.9 373.8 280.7 365.0 C279.5 356.2 278.3 347.9 277.5 337.5 C276.7 327.1 276.0 308.3 275.8 302.5 Z" fill="#B49EB8"/><path d="M284.0 322.5 C285.2 321.4 288.9 316.2 291.0 316.0 C293.1 315.8 294.8 317.4 296.8 321.0 C298.8 324.6 300.7 333.0 303.0 337.5 C305.3 342.0 308.0 347.2 310.5 348.0 C313.0 348.8 314.7 345.6 318.0 342.5 C321.3 339.4 327.2 330.6 330.5 329.4 C333.8 328.1 335.1 331.4 338.0 335.0 C340.9 338.6 344.7 347.0 348.0 351.0 C351.3 355.0 354.9 358.1 358.0 358.8 C361.1 359.4 363.4 358.5 366.8 355.0 C370.1 351.5 374.7 340.7 378.0 337.5 C381.3 334.3 383.8 334.8 386.8 335.6 C389.7 336.4 392.4 338.9 395.5 342.5 C398.6 346.1 403.0 354.8 405.5 357.5 C408.0 360.2 408.0 358.5 410.5 358.8 C413.0 359.0 417.0 361.0 420.5 358.8 C424.0 356.5 427.6 348.9 431.8 345.0 C435.9 341.1 442.2 337.0 445.5 335.6 C448.8 334.2 449.2 334.9 451.8 336.9 C454.2 338.9 457.8 344.3 460.5 347.5 C463.2 350.7 464.9 354.8 468.0 356.2 C471.1 357.7 475.1 357.7 479.2 356.2 C483.4 354.8 487.8 351.2 493.0 347.5 C498.2 343.8 505.5 337.7 510.5 333.8 C515.5 329.8 520.9 325.4 523.0 323.8 L524.0 325.0 C523.5 328.3 521.8 338.3 521.0 345.0 C520.2 351.7 520.4 356.0 519.0 365.0 C517.6 374.0 516.6 387.9 512.7 398.8 C508.8 409.6 503.2 420.9 495.8 430.4 C488.4 439.9 478.9 448.3 468.4 455.7 C457.8 463.1 444.1 470.8 432.5 474.7 C420.9 478.6 409.0 479.3 398.8 479.0 C388.5 478.7 380.8 477.0 371.0 473.0 C361.2 469.0 350.3 463.0 340.0 455.0 C329.7 447.0 317.2 435.8 309.0 425.0 C300.8 414.2 294.7 400.0 291.0 390.0 C287.3 380.0 288.2 373.3 287.0 365.0 C285.8 356.7 284.7 345.8 284.0 340.0 C283.3 334.2 283.2 331.7 283.0 330.0 Z" fill="url(#red)"/><path d="M276.1 330.0 C276.0 325.4 275.0 308.8 275.8 302.5 C276.5 296.2 278.3 294.3 280.5 292.0 C282.7 289.7 285.7 288.7 289.0 288.8 C292.3 288.8 296.1 290.6 300.5 292.5 C304.9 294.4 311.3 298.4 315.5 300.0 C319.7 301.6 321.8 303.6 325.5 301.9 C329.2 300.2 333.8 293.9 338.0 290.0 C342.2 286.1 346.9 281.7 350.5 278.8 C354.1 275.8 357.2 273.0 359.9 272.5 C362.6 272.0 363.9 273.1 366.8 276.0 C369.6 278.9 373.6 286.3 376.8 290.0 C379.9 293.7 382.8 296.8 385.5 298.0 C388.2 299.2 390.5 298.8 393.0 297.5 C395.5 296.2 397.6 293.3 400.5 290.0 C403.4 286.7 407.4 280.4 410.5 277.5 C413.6 274.6 416.5 272.5 419.2 272.5 C422.0 272.5 424.0 274.0 426.8 277.5 C429.5 281.0 432.4 289.7 435.5 293.8 C438.6 297.8 442.6 300.6 445.5 301.9 C448.4 303.1 450.1 303.6 453.0 301.2 C455.9 298.9 459.9 291.2 463.0 287.5 C466.1 283.8 469.0 279.8 471.8 278.8 C474.5 277.7 476.8 278.3 479.2 281.2 C481.8 284.2 484.2 291.6 486.8 296.2 C489.2 300.9 492.2 307.2 494.2 309.4 C496.3 311.6 497.2 311.4 499.2 309.4 C501.3 307.4 504.0 300.6 506.8 297.5 C509.5 294.4 513.2 290.8 515.5 290.6 C517.8 290.4 519.2 293.0 520.5 296.2 C521.8 299.5 522.4 305.6 523.0 310.0 C523.6 314.4 524.0 320.4 524.2 322.5 " fill="none" stroke="#101010" stroke-width="1.5"/><path d="M278.0 331.9 C279.0 330.3 281.8 325.1 284.0 322.5 C286.2 319.9 288.9 316.2 291.0 316.0 C293.1 315.8 294.8 317.4 296.8 321.0 C298.8 324.6 300.7 333.0 303.0 337.5 C305.3 342.0 308.0 347.2 310.5 348.0 C313.0 348.8 314.7 345.6 318.0 342.5 C321.3 339.4 327.2 330.6 330.5 329.4 C333.8 328.1 335.1 331.4 338.0 335.0 C340.9 338.6 344.7 347.0 348.0 351.0 C351.3 355.0 354.9 358.1 358.0 358.8 C361.1 359.4 363.4 358.5 366.8 355.0 C370.1 351.5 374.7 340.7 378.0 337.5 C381.3 334.3 383.8 334.8 386.8 335.6 C389.7 336.4 392.4 338.9 395.5 342.5 C398.6 346.1 403.0 354.8 405.5 357.5 C408.0 360.2 408.0 358.5 410.5 358.8 C413.0 359.0 417.0 361.0 420.5 358.8 C424.0 356.5 427.6 348.9 431.8 345.0 C435.9 341.1 442.2 337.0 445.5 335.6 C448.8 334.2 449.2 334.9 451.8 336.9 C454.2 338.9 457.8 344.3 460.5 347.5 C463.2 350.7 464.9 354.8 468.0 356.2 C471.1 357.7 475.1 357.7 479.2 356.2 C483.4 354.8 487.8 351.2 493.0 347.5 C498.2 343.8 505.5 337.7 510.5 333.8 C515.5 329.8 519.7 325.7 523.0 323.8 C526.3 321.8 529.2 322.2 530.5 321.9 " fill="none" stroke="#101010" stroke-width="1.5"/><path d="M531.8 322.5 C531.1 326.2 529.2 337.9 528.0 345.0 C526.8 352.1 526.1 356.0 524.3 365.0 C522.5 374.0 521.0 387.5 517.0 398.8 C513.0 410.0 508.1 422.0 500.0 432.5 C491.9 443.0 479.6 454.1 468.4 462.0 C457.1 469.9 444.1 476.1 432.5 480.0 C420.9 483.9 410.0 485.7 398.8 485.3 C387.5 484.9 375.8 481.8 365.0 477.5 C354.2 473.2 344.7 468.2 334.0 459.5 C323.3 450.8 309.2 436.5 301.0 425.0 C292.8 413.5 288.3 400.3 284.9 390.3 C281.5 380.3 281.9 373.8 280.7 365.0 C279.5 356.2 278.3 347.9 277.5 337.5 C276.7 327.1 276.0 308.3 275.8 302.5 " fill="none" stroke="#151515" stroke-width="1.1"/><path d="M278.6 331.9 C279.3 328.9 281.6 318.2 283.0 313.8 C284.4 309.3 284.7 307.1 286.8 305.0 C288.8 302.9 292.4 301.7 295.5 301.2 C298.6 300.8 301.8 301.9 305.5 302.5 C309.2 303.1 314.7 305.1 318.0 305.0 C321.3 304.9 324.2 302.4 325.5 301.9 " fill="none" stroke="#252525" stroke-width="1"/><path d="M362.3 272.8 C363.4 273.4 366.3 273.4 369.1 276.3 C372.0 279.2 376.0 286.6 379.1 290.3 C382.3 294.0 385.2 297.1 387.9 298.3 C390.6 299.6 394.1 297.9 395.4 297.8 " fill="none" stroke="#181818" stroke-width="1.2"/><path d="M421.6 272.8 C422.9 273.6 426.4 274.3 429.1 277.8 C431.9 281.3 434.8 290.0 437.9 294.1 C441.0 298.1 445.0 300.9 447.9 302.2 C450.8 303.4 454.1 301.7 455.4 301.6 " fill="none" stroke="#181818" stroke-width="1.2"/><path d="M474.1 279.1 C475.4 279.5 479.1 278.6 481.6 281.6 C484.1 284.5 486.6 291.9 489.1 296.6 C491.6 301.2 494.6 307.5 496.6 309.7 C498.7 311.9 500.8 309.7 501.6 309.7 " fill="none" stroke="#181818" stroke-width="1.2"/><path d="M517.9 290.9 C518.7 291.8 521.6 293.3 522.9 296.6 C524.1 299.8 524.8 305.9 525.4 310.3 C526.0 314.7 526.4 320.7 526.6 322.8 " fill="none" stroke="#181818" stroke-width="1.2"/><path d="M293.4 316.3 C294.4 317.1 297.1 317.7 299.1 321.3 C301.1 324.9 303.1 333.3 305.4 337.8 C307.7 342.3 311.6 346.6 312.9 348.3 " fill="none" stroke="#181818" stroke-width="1.2"/><path d="M332.9 329.7 C334.1 330.6 337.5 331.7 340.4 335.3 C343.3 338.9 347.1 347.3 350.4 351.3 C353.7 355.3 358.7 357.8 360.4 359.1 " fill="none" stroke="#181818" stroke-width="1.2"/><path d="M389.1 335.9 C390.6 337.1 394.8 339.2 397.9 342.8 C401.0 346.4 405.4 355.1 407.9 357.8 C410.4 360.5 412.1 358.8 412.9 359.1 " fill="none" stroke="#181818" stroke-width="1.2"/><path d="M454.1 337.2 C455.6 339.0 460.2 344.6 462.9 347.8 C465.6 351.0 467.3 355.1 470.4 356.6 C473.5 358.0 479.8 356.6 481.6 356.6 " fill="none" stroke="#181818" stroke-width="1.2"/><path d="M64 719 V679" stroke="#1020C8" stroke-width="3"/><path d="M60 683 L64 671 L68 683 Z" fill="#1020C8"/><path d="M64 719 L102 722" stroke="#10C010" stroke-width="3"/><path d="M100 718 L112 722 L100 726 Z" fill="#10C010"/><path d="M64 719 L50 727" stroke="#C01010" stroke-width="3"/><ellipse cx="52" cy="726" rx="4" ry="3" fill="#C01010" transform="rotate(-30 52 726)"/><circle cx="64" cy="719" r="4.5" fill="#F0E020" stroke="#A09000"/><text x="60" y="666" font-family="Liberation Sans" font-size="13" fill="#1020C8">Z</text><text x="113" y="728" font-family="Liberation Sans" font-size="13" fill="#10C010">Y</text><text x="37" y="737" font-family="Liberation Sans" font-size="13" fill="#D02020">X</text></svg>
<div class="a" style="left:1254px;top:814px;width:22px;height:22px;background:#E2E3E8;border:1px solid #687078"></div>
<svg class="a" style="left:1258px;top:818px" width="14" height="14" viewBox="0 0 14 14"><defs><linearGradient id="cg3" x1="0" y1="0" x2="1" y2="1"><stop offset="0" stop-color="#FFFCB0"/><stop offset="1" stop-color="#F0D020"/></linearGradient></defs><rect x="0" y="0" width="14" height="14" fill="url(#cg3)"/><path d="M0.5 13.5 H13.5 V0.5" stroke="#705000" fill="none"/><path d="M0.5 13.5 V0.5 H13.5" stroke="#C0A040" fill="none" stroke-width=".6"/><path d="M5 4 V10 A1.5 1.5 0 0 0 9 10 V4 A1.2 1.2 0 0 0 6.6 4 V9.5" stroke="#101000" stroke-width="1.3" fill="none"/></svg>
<div class="a" style="left:0;top:929px;width:1280px;height:1px;background:#FFFFFF"></div>
<div class="a" style="left:0;top:930px;width:1280px;height:30px;background:linear-gradient(#2A58B0 0px,#2A58B0 1px,#4A94F2 1px,#4A94F2 3px,#2A6AE0 4px,#2258D8 7px,#2258D8 50%,#2262DC 85%,#1E46B0 100%)"></div>
<div class="a" style="left:1166px;top:930px;width:114px;height:30px;background:linear-gradient(#1B8FEC 0px,#18B9F6 2px,#149CEA 5px,#0F8FE3 50%,#1290E3 90%,#095BC9 100%);border-left:1px solid #0A4FAA"></div>
<div class="a" style="left:0;top:930px;width:96px;height:29px;border-radius:0 9px 9px 0;background:linear-gradient(#2F7F2F 0px,#52AA52 2px,#4BA84B 6px,#3CA03C 50%,#379537 80%,#2D7A2D 100%);box-shadow:inset -4px 0 5px rgba(0,50,0,.45)"></div>
<svg class="a" style="left:11px;top:935px" width="19" height="19"><path d="M1 3 Q4 1 9 3 V9 Q4 7 1 9 Z" fill="#F05A24"/><path d="M10 3 Q14 5 18 3 V9 Q14 11 10 9 Z" fill="#6CBF3C"/><path d="M1 10 Q4 8 9 10 V16 Q4 14 1 16 Z" fill="#3A8CE8"/><path d="M10 10 Q14 12 18 10 V16 Q14 18 10 16 Z" fill="#F8C800"/></svg>
<div class="t" style="left:37px;top:936px;font:italic 18px 'Liberation Sans', sans-serif;color:#fff;text-shadow:1px 1px 0 rgba(20,60,20,.6)">开始</div>
<svg class="a" style="left:107px;top:936px" width="18" height="18"><path d="M9 1 A8 8 0 0 0 1 9" stroke="#F05020" stroke-width="3" fill="none"/><path d="M1 9 A8 8 0 0 0 9 17" stroke="#2A70E0" stroke-width="3" fill="none"/><path d="M9 17 A8 8 0 0 0 17 9 A8 8 0 0 0 9 1" stroke="#E8C030" stroke-width="3" fill="none"/><circle cx="9" cy="9" r="5.5" fill="#fff"/><path d="M7 5.5 L12.5 9 L7 12.5 Z" fill="#000"/></svg>
<svg class="a" style="left:131px;top:935px" width="20" height="18"><rect x="1" y="2" width="5" height="14" fill="#F0D020" stroke="#A08010"/><path d="M4 16 L19 16 L16 10 Z" fill="#D02020"/><circle cx="9" cy="6" r="4" fill="#E8F4FF" stroke="#203C80" stroke-width="1.2"/><path d="M11.5 9 L16 14" stroke="#fff" stroke-width="1.6"/></svg>
<svg class="a" style="left:154px;top:935px" width="19" height="19"><path d="M15 11 H5 Q5 6 10 6 Q15 6 15 11 Z M5.5 12 Q6 16 10 16 Q13 16 14.5 14" fill="none" stroke="#3A9CF0" stroke-width="2.6"/><path d="M2 15 Q0 10 6 5 Q13 0 17 2 Q19 5 14 10" fill="none" stroke="#2A78D8" stroke-width="1.3"/></svg>
<div class="t" style="left:181px;top:934px;font:bold 11px 'Liberation Sans', sans-serif;color:#C8E0FF">&#187;</div>
<div class="a" style="left:198px;top:934px;width:159px;height:22px;border-radius:3px;background:linear-gradient(#1A4BB8,#1E52C0 20%,#1F56C6 80%,#2A64D4);box-shadow:inset 1px 1px 1px #0F2E80"></div>
<div class="t" style="left:227px;top:939px;color:#fff"><span style="font:11px 'Liberation Mono', monospace;letter-spacing:-0.60px;position:relative;top:0px">Solid&nbsp;Edge&nbsp;V19&nbsp;-...</span></div>
<svg class="a" style="left:207px;top:937px" width="16" height="16"><rect width="16" height="16" fill="#D8F0FF"/><path d="M2 5 L8 14 L14 5 Z" fill="#2A8FD8"/><path d="M3 2 L8 6" stroke="#B05030" stroke-width="2"/><path d="M10 10 L15 13" stroke="#D09080" stroke-width="2"/></svg>
<div class="a" style="left:359px;top:934px;width:158px;height:22px;border-radius:3px;background:linear-gradient(#5CA2F8 0px,#3C81F3 2px,#3A7FF1 50%,#3473E8 100%);box-shadow:inset -1px -1px 1px #1A50C0"></div>
<div class="t" style="left:388px;top:939px;color:#fff"><span style="font:11px 'Liberation Mono', monospace;letter-spacing:-0.60px;position:relative;top:0px">Solid&nbsp;Edge</span></div>
<svg class="a" style="left:368px;top:937px" width="17" height="17"><rect x="1" y="6" width="10" height="10" fill="#fff" stroke="#333"/><path d="M3 9 H9 M3 11 H9 M3 13 H9" stroke="#666"/><text x="8" y="13" font-family="Liberation Sans" font-weight="bold" font-size="14" fill="#F8E000" stroke="#404000" stroke-width=".6">?</text></svg>
<div class="a" style="left:519px;top:934px;width:158px;height:22px;border-radius:3px;background:linear-gradient(#5CA2F8 0px,#3C81F3 2px,#3A7FF1 50%,#3473E8 100%);box-shadow:inset -1px -1px 1px #1A50C0"></div>
<div class="t" style="left:548px;top:939px;color:#fff"><span style="font:11px 'Liberation Mono', monospace;letter-spacing:-0.60px;position:relative;top:0px">wiseMECH&nbsp;for&nbsp;SEC...</span></div>
<svg class="a" style="left:528px;top:937px" width="16" height="16"><circle cx="8" cy="8" r="6.5" fill="#B8C0C8" stroke="#404850"/><circle cx="8" cy="8" r="3" fill="#506070"/><path d="M3 14 H13" stroke="#303030" stroke-width="2"/></svg>
<div class="a" style="left:679px;top:934px;width:158px;height:22px;border-radius:3px;background:linear-gradient(#5CA2F8 0px,#3C81F3 2px,#3A7FF1 50%,#3473E8 100%);box-shadow:inset -1px -1px 1px #1A50C0"></div>
<div class="t" style="left:708px;top:939px;color:#fff"><span style="font-size:12px">三星</span><span style="font:11px 'Liberation Mono', monospace;letter-spacing:-0.60px;position:relative;top:0px">&nbsp;mySingle&nbsp;-&nbsp;...</span></div>
<svg class="a" style="left:688px;top:937px" width="16" height="16"><rect x="1" y="2" width="11" height="13" fill="#fff" stroke="#607080"/><circle cx="9" cy="9" r="5" fill="none" stroke="#3A90E8" stroke-width="2.2"/><path d="M5 8.5 H13" stroke="#3A90E8" stroke-width="1.6"/></svg>
<div class="t" style="left:1074px;top:939px;font:11px 'Liberation Mono', monospace;letter-spacing:-0.6px;color:#fff">CH</div>
<svg class="a" style="left:1094px;top:936px" width="17" height="17"><rect width="17" height="17" fill="#000"/><rect x="1" y="1" width="7" height="7" fill="#fff"/><rect x="9" y="1" width="7" height="7" fill="#fff"/><rect x="1" y="9" width="7" height="7" fill="#F8D800"/><rect x="9" y="9" width="7" height="7" fill="#E02020"/><text x="1" y="7" font-size="7" font-family="Liberation Sans" font-weight="bold">M</text><text x="10" y="7" font-size="7" font-family="Liberation Sans" font-weight="bold">S</text></svg>
<div class="t" style="left:1114px;top:936px;font:15px 'Liberation Sans', sans-serif;color:#fff">传</div>
<div class="t" style="left:1134px;top:936px;font:17px 'Liberation Sans', sans-serif;color:#fff">中</div>
<svg class="a" style="left:1157px;top:935px" width="20" height="20"><circle cx="10" cy="10" r="8.5" fill="#5AA8F0" stroke="#E0F0FF" stroke-width="1"/><path d="M12 5 L7 10 L12 15" stroke="#fff" stroke-width="2.4" fill="none"/></svg>
<svg class="a" style="left:1179px;top:937px" width="16" height="16"><rect x="5" y="1" width="10" height="8" fill="#5A6A90" stroke="#1A2040"/><rect x="1" y="6" width="10" height="8" fill="#6A7AA8" stroke="#1A2040"/><rect x="3" y="14" width="6" height="2" fill="#C0C8E0"/></svg>
<svg class="a" style="left:1197px;top:936px" width="17" height="17"><rect x=".5" y=".5" width="16" height="16" fill="#F4D63C" stroke="#A08018"/><path d="M6 13 V5 A2.5 2.5 0 0 1 11 5 V12 A1.2 1.2 0 0 1 8.6 12 V5" fill="none" stroke="#604000" stroke-width="1.2"/></svg>
<svg class="a" style="left:1215px;top:935px" width="15" height="18"><path d="M2 8 L9 2 L11 5 L6 11 Z" fill="#E0C050" stroke="#604000"/><path d="M5 10 L1 17 H12 Z" fill="#1A50D0"/><path d="M11 1 Q14 3 13 6" stroke="#C0E0FF" fill="none"/></svg>
<div class="t" style="left:1237px;top:939px;font:11px 'Liberation Mono', monospace;letter-spacing:-0.5px;color:#fff">14:29</div>
<div class="a" style="left:1177px;top:889px;width:102px;height:47px;background:#FFFFE1;border:1px solid #000"></div>
<div class="t" style="left:1180px;top:891px;line-height:15px"><span style="font-size:12px">本地连接</span><br><span style="font-size:12px">速度</span><span style="font:11px 'Liberation Mono', monospace;letter-spacing:-0.60px;position:relative;top:0px">:&nbsp;100.0&nbsp;Mbps</span><br><span style="font-size:12px">状态</span><span style="font:11px 'Liberation Mono', monospace;letter-spacing:-0.60px;position:relative;top:0px">:&nbsp;</span><span style="font-size:12px">已连接上</span></div>
</body></html>
